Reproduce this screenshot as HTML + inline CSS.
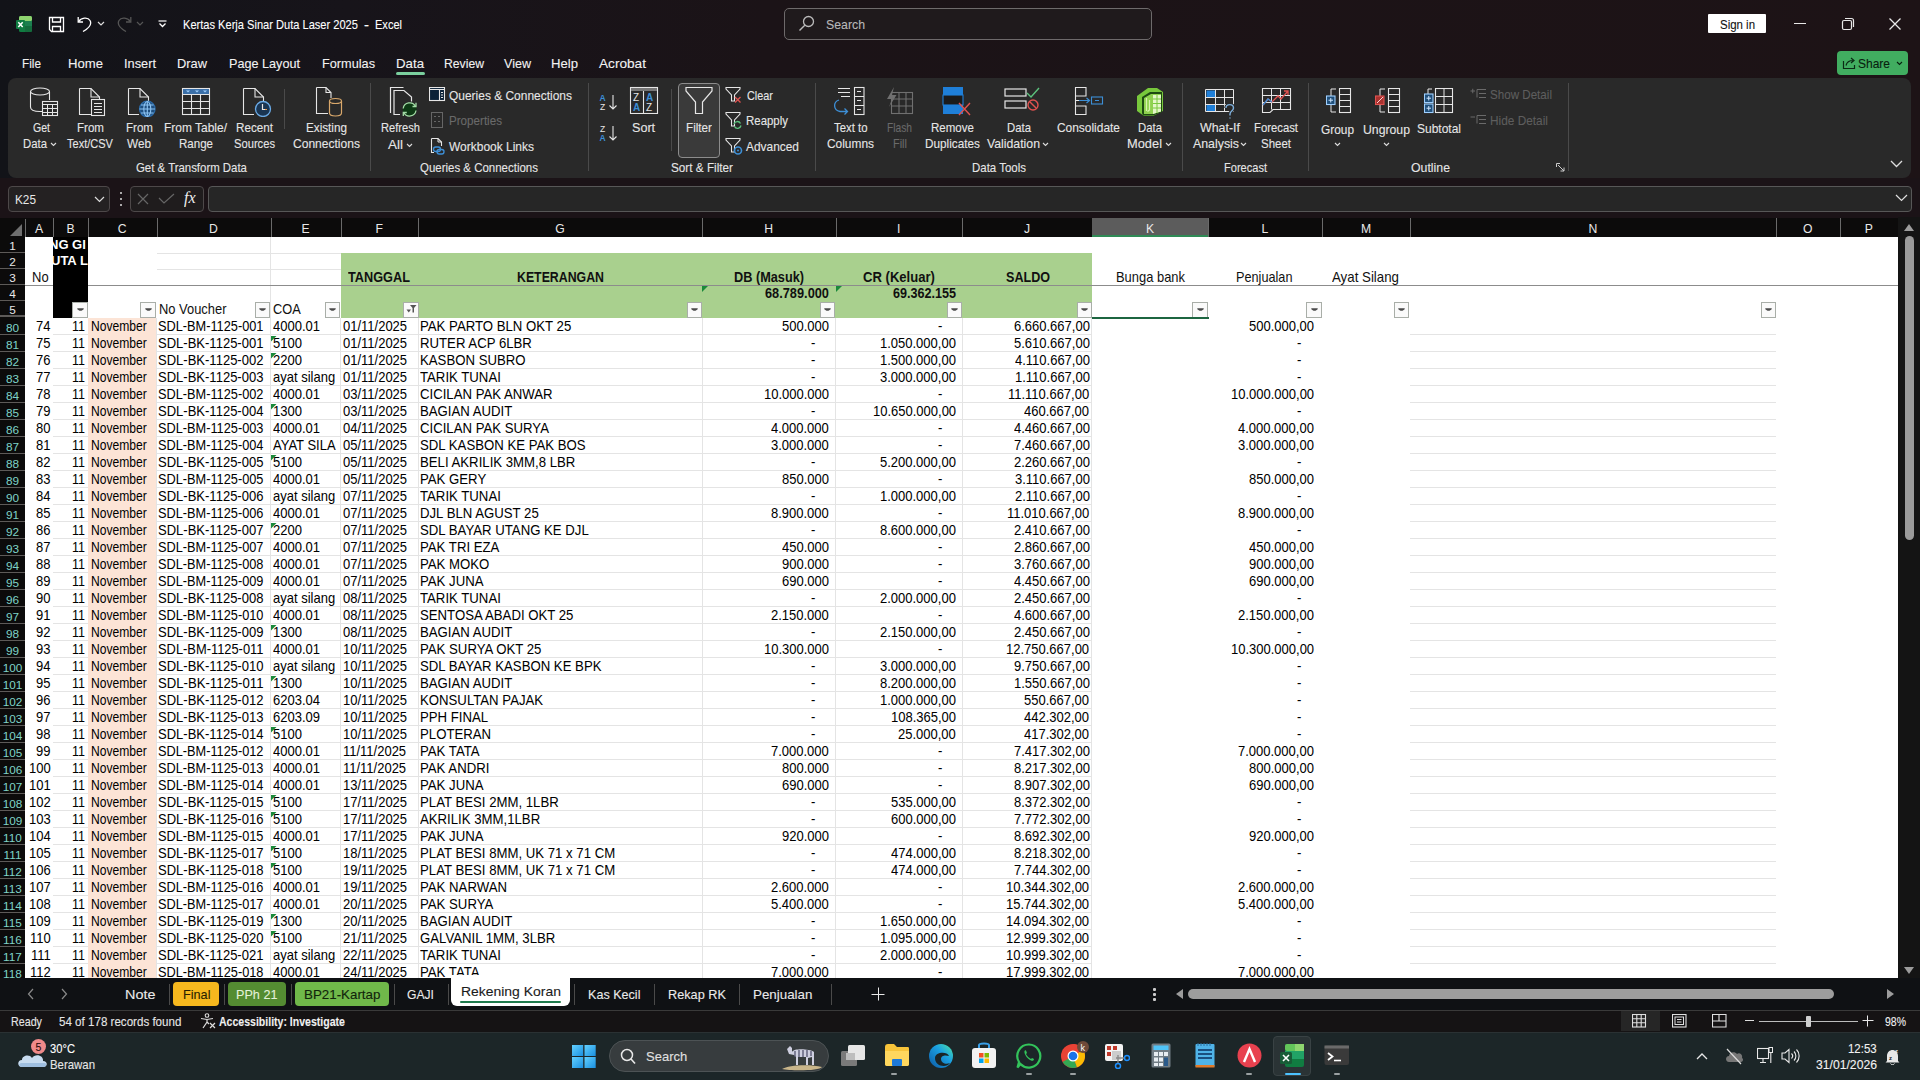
<!DOCTYPE html>
<html><head><meta charset="utf-8"><title>Excel</title>
<style>
html,body{margin:0;padding:0;}
body{width:1920px;height:1080px;overflow:hidden;position:relative;background:#1b1317;font-family:"Liberation Sans",sans-serif;}
.b,.t,.s{position:absolute;}
.t{white-space:pre;line-height:20px;transform-origin:0 50%;}
.u{-webkit-text-stroke:0.1px currentColor;}
</style></head><body>
<div class="b" style="left:0px;top:0px;width:1920px;height:178px;background:linear-gradient(90deg,#121318 0%,#17141a 18%,#1b1317 40%,#1d1316 100%);"></div>
<svg class="s" style="left:16px;top:16px;" width="16" height="16" viewBox="0 0 16 16" fill="none"><rect x="3" y="0" width="13" height="16" rx="1.5" fill="#107c41"/><rect x="3" y="0" width="13" height="5" rx="1.5" fill="#8ed36f"/><rect x="3" y="5" width="13" height="5" fill="#21a366"/><rect x="9" y="5" width="7" height="11" fill="#185c37" opacity="0.5"/><rect x="0" y="4" width="9" height="9" rx="1" fill="#107c41"/><path d="M2.3 6.2 L6.7 11 M6.7 6.2 L2.3 11" stroke="#fff" stroke-width="1.5"/></svg>
<svg class="s" style="left:48px;top:16px;" width="17" height="17" viewBox="0 0 17 17" fill="none"><path d="M1.5 1.5 H15.5 V15.5 H3.5 L1.5 13.5 Z" stroke="#fff" stroke-width="1.3"/><path d="M4.5 1.5 V6 H12.5 V1.5" stroke="#fff" stroke-width="1.3"/><path d="M4.5 15.5 V10.5 H12.5 V15.5" stroke="#fff" stroke-width="1.3"/></svg>
<svg class="s" style="left:77px;top:16px;" width="16" height="16" viewBox="0 0 16 16" fill="none"><path d="M1.2 1 V6 H6" stroke="#fff" stroke-width="1.3"/><path d="M1.5 5.8 C4 1.5 11 1 13 4.5 C15 8 12 12 6 15.5" stroke="#fff" stroke-width="1.3"/></svg>
<svg class="s" style="left:97px;top:21px;" width="8" height="5" viewBox="0 0 8 5" fill="none"><path d="M1 1 L4 4 L7 1" stroke="#ddd" stroke-width="1.2"/></svg>
<svg class="s" style="left:116px;top:16px;" width="16" height="16" viewBox="0 0 16 16" fill="none"><path d="M14.8 1 V6 H10" stroke="#555" stroke-width="1.3"/><path d="M14.5 5.8 C12 1.5 5 1 3 4.5 C1 8 4 12 10 15.5" stroke="#555" stroke-width="1.3"/></svg>
<svg class="s" style="left:136px;top:21px;" width="8" height="5" viewBox="0 0 8 5" fill="none"><path d="M1 1 L4 4 L7 1" stroke="#555" stroke-width="1.2"/></svg>
<svg class="s" style="left:158px;top:20px;" width="9" height="8" viewBox="0 0 9 8" fill="none"><path d="M0.5 1 H8.5" stroke="#fff" stroke-width="1.2"/><path d="M1.5 3.5 L4.5 6.5 L7.5 3.5" stroke="#fff" stroke-width="1.3"/></svg>
<div class="t u" style="left:183.00px;top:15.15px;font-size:12.80px;color:#fff;transform:scaleX(0.8660);">Kertas Kerja Sinar Duta Laser 2025</div>
<div class="t u" style="left:364.00px;top:15.15px;font-size:12.80px;color:#fff;transform:scaleX(1.1729);">-</div>
<div class="t u" style="left:375.00px;top:15.15px;font-size:12.80px;color:#fff;transform:scaleX(0.8626);">Excel</div>
<div class="b" style="left:784px;top:8px;width:368px;height:32px;background:#1f1a1c;box-sizing:border-box;border:1px solid #6e6a6b;border-radius:5px;"></div>
<svg class="s" style="left:798px;top:15px;" width="17" height="17" viewBox="0 0 17 17" fill="none"><circle cx="10.5" cy="6.5" r="5" stroke="#bbb" stroke-width="1.3"/><path d="M6.8 10.2 L1.5 15.5" stroke="#bbb" stroke-width="1.4"/></svg>
<div class="t u" style="left:826.00px;top:15.15px;font-size:13.00px;color:#b8b8b8;transform:scaleX(0.9468);">Search</div>
<div class="b" style="left:1708px;top:14px;width:58px;height:19px;background:#ffffff;border-radius:1px;"></div>
<div class="t u" style="left:1719.50px;top:15.15px;font-size:13.00px;color:#111;transform:scaleX(0.8805);">Sign in</div>
<div class="b" style="left:1794px;top:23px;width:12px;height:1px;background:#e8e8e8;"></div>
<svg class="s" style="left:1841px;top:17px;" width="14" height="14" viewBox="0 0 14 14" fill="none"><rect x="1.5" y="3.5" width="9" height="9" rx="1.5" stroke="#e8e8e8" stroke-width="1.2"/><path d="M4 1.5 H10.5 Q12.5 1.5 12.5 3.5 V10" stroke="#e8e8e8" stroke-width="1.2"/></svg>
<svg class="s" style="left:1888px;top:17px;" width="14" height="14" viewBox="0 0 14 14" fill="none"><path d="M1.5 1.5 L12.5 12.5 M12.5 1.5 L1.5 12.5" stroke="#e8e8e8" stroke-width="1.3"/></svg>
<div class="t u" style="left:22.00px;top:54.15px;font-size:13.00px;color:#f2f2f2;transform:scaleX(0.9070);">File</div>
<div class="t u" style="left:68.00px;top:54.15px;font-size:13.00px;color:#f2f2f2;transform:scaleX(1.0093);">Home</div>
<div class="t u" style="left:124.00px;top:54.15px;font-size:13.00px;color:#f2f2f2;transform:scaleX(0.9842);">Insert</div>
<div class="t u" style="left:177.00px;top:54.15px;font-size:13.00px;color:#f2f2f2;transform:scaleX(0.9889);">Draw</div>
<div class="t u" style="left:229.00px;top:54.15px;font-size:13.00px;color:#f2f2f2;transform:scaleX(0.9725);">Page Layout</div>
<div class="t u" style="left:322.00px;top:54.15px;font-size:13.00px;color:#f2f2f2;transform:scaleX(0.9782);">Formulas</div>
<div class="t u" style="left:396.00px;top:54.15px;font-size:13.00px;color:#f2f2f2;transform:scaleX(1.0196);">Data</div>
<div class="t u" style="left:444.00px;top:54.15px;font-size:13.00px;color:#f2f2f2;transform:scaleX(0.9384);">Review</div>
<div class="t u" style="left:504.00px;top:54.15px;font-size:13.00px;color:#f2f2f2;transform:scaleX(0.9662);">View</div>
<div class="t u" style="left:551.00px;top:54.15px;font-size:13.00px;color:#f2f2f2;transform:scaleX(1.0098);">Help</div>
<div class="t u" style="left:599.00px;top:54.15px;font-size:13.00px;color:#f2f2f2;transform:scaleX(1.0490);">Acrobat</div>
<div class="b" style="left:396px;top:72px;width:29px;height:3px;background:#7bcf9e;border-radius:2px;"></div>
<div class="b" style="left:1837px;top:51px;width:71px;height:24px;background:#41ad60;border-radius:4px;"></div>
<svg class="s" style="left:1842px;top:56px;" width="15" height="14" viewBox="0 0 15 14" fill="none"><path d="M1.5 5 V12.5 H12.5 V9" stroke="#0b2a14" stroke-width="1.2"/><path d="M4 9.5 C5 5.5 8 4.5 11 4.5 M9 2 L12 4.5 L9 7" stroke="#0b2a14" stroke-width="1.2"/></svg>
<div class="t u" style="left:1858.00px;top:54.15px;font-size:13.00px;color:#08200f;transform:scaleX(0.9224);">Share</div>
<svg class="s" style="left:1896px;top:61px;" width="7" height="5" viewBox="0 0 7 5" fill="none"><path d="M1 1 L3.5 3.5 L6 1" stroke="#08200f" stroke-width="1.1"/></svg>
<div class="b" style="left:8px;top:78px;width:1903px;height:100px;background:#292929;border-radius:8px;"></div>
<svg class="s" style="left:29px;top:87px;" width="30" height="30" viewBox="0 0 30 30" fill="none"><path d="M1.5 4.5 V20 C1.5 23 6 24.5 11 24.5 H13" stroke="#e6e6e6" stroke-width="1.1"/><ellipse cx="11" cy="4.5" rx="9.5" ry="3.5" stroke="#e6e6e6" stroke-width="1.1"/><path d="M20.5 4.5 V13" stroke="#e6e6e6" stroke-width="1.1"/><rect x="13.5" y="14.5" width="15" height="14" stroke="#e6e6e6" stroke-width="1.1" fill="#292929"/><path d="M13.5 17.5 H28.5 M13.5 21.5 H28.5 M13.5 25.5 H28.5 M18.5 17.5 V29 M23.5 17.5 V29" stroke="#e6e6e6" stroke-width="1"/></svg>
<div class="t u" style="left:32.50px;top:117.66px;font-size:12.60px;color:#e6e6e6;transform:scaleX(0.8371);">Get</div>
<div class="t u" style="left:23.00px;top:134.16px;font-size:12.60px;color:#e6e6e6;transform:scaleX(0.9017);">Data</div>
<svg class="s" style="left:49.5px;top:142px;" width="7" height="5" viewBox="0 0 7 5" fill="none"><path d="M1 1 L3.5 3.5 L6 1" stroke="#ddd" stroke-width="1.1"/></svg>
<svg class="s" style="left:78px;top:87px;" width="30" height="30" viewBox="0 0 30 30" fill="none"><path d="M1.5 1.5 H13 L21.5 10 V13 M1.5 1.5 V27.5 H13" stroke="#e6e6e6" stroke-width="1.1"/><path d="M13 1.5 V10 H21.5" stroke="#e6e6e6" stroke-width="1.1"/><rect x="13.5" y="12.5" width="13" height="16" stroke="#e6e6e6" stroke-width="1.1" fill="#292929"/><path d="M16 16.5 H24 M16 19.5 H24 M16 22.5 H24 M16 25.5 H24" stroke="#e6e6e6" stroke-width="1"/></svg>
<div class="t u" style="left:76.50px;top:117.66px;font-size:12.60px;color:#e6e6e6;transform:scaleX(0.9184);">From</div>
<div class="t u" style="left:67.00px;top:134.16px;font-size:12.60px;color:#e6e6e6;transform:scaleX(0.8759);">Text/CSV</div>
<svg class="s" style="left:127px;top:87px;" width="30" height="30" viewBox="0 0 30 30" fill="none"><path d="M1.5 1.5 H13 L21.5 10 V14 M1.5 1.5 V27.5 H12" stroke="#e6e6e6" stroke-width="1.1"/><path d="M13 1.5 V10 H21.5" stroke="#e6e6e6" stroke-width="1.1"/><circle cx="20.3" cy="22" r="7.8" fill="#1f4f7f" stroke="#2a6aa8" stroke-width="1.2"/><path d="M12.5 22 H28 M20.3 14.5 V29.5 M14 18 H26.5 M14 26 H26.5" stroke="#8cc4f4" stroke-width="1.1"/><ellipse cx="20.3" cy="22" rx="3.5" ry="7.5" stroke="#8cc4f4" stroke-width="1.1"/></svg>
<div class="t u" style="left:125.50px;top:117.66px;font-size:12.60px;color:#e6e6e6;transform:scaleX(0.9184);">From</div>
<div class="t u" style="left:127.00px;top:134.16px;font-size:12.60px;color:#e6e6e6;transform:scaleX(0.9346);">Web</div>
<svg class="s" style="left:181px;top:87px;" width="30" height="30" viewBox="0 0 30 30" fill="none"><rect x="1.5" y="1.5" width="27" height="26" stroke="#e6e6e6" stroke-width="1.1"/><rect x="2" y="2" width="26" height="5" fill="#3a6fa8"/><path d="M5 3.5 L7 5.5 L9 3.5 Z M14 3.5 L16 5.5 L18 3.5 Z M22 3.5 L24 5.5 L26 3.5 Z" fill="#9fd0ff"/><path d="M1.5 7.5 H28.5 M1.5 14.5 H28.5 M1.5 21.5 H28.5 M10.5 7.5 V27.5 M19.5 7.5 V27.5" stroke="#e6e6e6" stroke-width="1.1"/></svg>
<div class="t u" style="left:164.00px;top:117.66px;font-size:12.60px;color:#e6e6e6;transform:scaleX(0.9503);">From Table/</div>
<div class="t u" style="left:179.00px;top:134.16px;font-size:12.60px;color:#e6e6e6;transform:scaleX(0.9157);">Range</div>
<svg class="s" style="left:242px;top:87px;" width="30" height="30" viewBox="0 0 30 30" fill="none"><path d="M1.5 1.5 H13 L21.5 10 V14 M1.5 1.5 V27.5 H12" stroke="#e6e6e6" stroke-width="1.1"/><path d="M13 1.5 V10 H21.5" stroke="#e6e6e6" stroke-width="1.1"/><circle cx="21" cy="22" r="7.5" fill="#1a3552" stroke="#6aaae6" stroke-width="1.3"/><path d="M20.5 17 V22.5 H24.5" stroke="#e6e6e6" stroke-width="1.2"/><path d="M23 22.5 H25" stroke="#e89a4a" stroke-width="1.2"/></svg>
<div class="t u" style="left:235.50px;top:117.66px;font-size:12.60px;color:#e6e6e6;transform:scaleX(0.9268);">Recent</div>
<div class="t u" style="left:234.00px;top:134.16px;font-size:12.60px;color:#e6e6e6;transform:scaleX(0.8870);">Sources</div>
<div class="b" style="left:284px;top:89px;width:1px;height:40px;background:#4a4a4a;"></div>
<svg class="s" style="left:315px;top:86px;" width="30" height="31" viewBox="0 0 30 31" fill="none"><path d="M1.5 1.5 H11 L16 6.5 V12 M1.5 1.5 V27.5 H13" stroke="#e6e6e6" stroke-width="1.1"/><path d="M11 1.5 V6.5 H16" stroke="#e6e6e6" stroke-width="1.1"/><path d="M14.5 15 V27 C14.5 29 17.5 30 20.5 30 C23.5 30 26.5 29 26.5 27 V15" stroke="#d9a86b" stroke-width="1.2" fill="#292929"/><ellipse cx="20.5" cy="15" rx="6" ry="2.5" stroke="#d9a86b" stroke-width="1.2" fill="#292929"/></svg>
<div class="t u" style="left:306.00px;top:117.66px;font-size:12.60px;color:#e6e6e6;transform:scaleX(0.9293);">Existing</div>
<div class="t u" style="left:293.00px;top:134.16px;font-size:12.60px;color:#e6e6e6;transform:scaleX(0.9565);">Connections</div>
<div class="t u" style="left:135.50px;top:157.96px;font-size:12.60px;color:#e6e6e6;transform:scaleX(0.9058);">Get &amp; Transform Data</div>
<div class="b" style="left:370px;top:83px;width:1px;height:88px;background:#4a4a4a;"></div>
<svg class="s" style="left:389px;top:86px;" width="30" height="31" viewBox="0 0 30 31" fill="none"><path d="M1.5 27 V1.5 H14.5" stroke="#e6e6e6" stroke-width="1.2"/><path d="M11 28.5 H5 V4.5 H15 L22.5 11 V15.5" stroke="#e6e6e6" stroke-width="1.2"/><circle cx="20.6" cy="23.4" r="7" fill="#0d3a14"/><path d="M14.2 22.5 A6.5 6.5 0 0 1 26.5 20.5 M27 24.5 A6.5 6.5 0 0 1 14.8 26.5" stroke="#a3dca6" stroke-width="1.3"/><path d="M23.5 20.5 H27 V16.8 M17.8 26.5 H14.3 V30" stroke="#a3dca6" stroke-width="1.3"/></svg>
<div class="t u" style="left:381.00px;top:118.16px;font-size:12.60px;color:#e6e6e6;transform:scaleX(0.8840);">Refresh</div>
<div class="t u" style="left:388.00px;top:134.66px;font-size:12.60px;color:#e6e6e6;transform:scaleX(1.0711);">All</div>
<svg class="s" style="left:405.5px;top:142.5px;" width="7" height="5" viewBox="0 0 7 5" fill="none"><path d="M1 1 L3.5 3.5 L6 1" stroke="#ddd" stroke-width="1.1"/></svg>
<svg class="s" style="left:429px;top:87px;" width="17" height="15" viewBox="0 0 17 15" fill="none"><rect x="0.5" y="0.5" width="15" height="13" fill="#0b2238" stroke="#e6e6e6" stroke-width="1.1"/><path d="M0.5 2.5 H15.5 M10.5 2.5 V13.5" stroke="#e6e6e6" stroke-width="1.1"/><path d="M12 5.5 H14 M12 8 H14 M12 10.5 H14" stroke="#e6e6e6" stroke-width="1"/></svg>
<div class="t u" style="left:449.00px;top:85.66px;font-size:12.60px;color:#e6e6e6;transform:scaleX(0.9493);">Queries &amp; Connections</div>
<svg class="s" style="left:431px;top:112px;" width="12" height="16" viewBox="0 0 12 16" fill="none"><rect x="0.5" y="0.5" width="11" height="15" stroke="#666" stroke-width="1"/><path d="M3 4.5 H5 M7 4.5 H9 M3 9.5 H5 M7 9.5 H9" stroke="#666" stroke-width="1"/></svg>
<div class="t u" style="left:449.00px;top:111.16px;font-size:12.60px;color:#6a6a6a;transform:scaleX(0.9229);">Properties</div>
<svg class="s" style="left:430px;top:137px;" width="16" height="19" viewBox="0 0 16 19" fill="none"><path d="M1.5 1.5 H8 L11.5 5 V9 M1.5 1.5 V15.5 H4" stroke="#e6e6e6" stroke-width="1.1"/><path d="M8 1.5 V5 H11.5" stroke="#e6e6e6" stroke-width="1"/><rect x="3.5" y="10" width="7" height="4.5" rx="2.2" stroke="#3d8fd6" stroke-width="1.3"/><rect x="7" y="12.5" width="7" height="4.5" rx="2.2" stroke="#3d8fd6" stroke-width="1.3"/></svg>
<div class="t u" style="left:449.00px;top:136.66px;font-size:12.60px;color:#e6e6e6;transform:scaleX(0.9507);">Workbook Links</div>
<div class="t u" style="left:420.00px;top:157.96px;font-size:12.60px;color:#e6e6e6;transform:scaleX(0.9107);">Queries &amp; Connections</div>
<div class="b" style="left:588px;top:83px;width:1px;height:88px;background:#4a4a4a;"></div>
<svg class="s" style="left:599px;top:93px;" width="20" height="18" viewBox="0 0 20 18" fill="none"><text x="0.5" y="8" font-size="8.5" font-family="Liberation Sans" font-weight="bold" fill="#3d8fd6">A</text><text x="1" y="17" font-size="8.5" font-family="Liberation Sans" fill="#e6e6e6">Z</text><path d="M14 2 V16 M10.5 12.5 L14 16 L17.5 12.5" stroke="#e6e6e6" stroke-width="1.1"/></svg>
<svg class="s" style="left:599px;top:124px;" width="20" height="18" viewBox="0 0 20 18" fill="none"><text x="1" y="8" font-size="8.5" font-family="Liberation Sans" fill="#e6e6e6">Z</text><text x="0.5" y="17" font-size="8.5" font-family="Liberation Sans" font-weight="bold" fill="#3d8fd6">A</text><path d="M14 2 V16 M10.5 12.5 L14 16 L17.5 12.5" stroke="#e6e6e6" stroke-width="1.1"/></svg>
<svg class="s" style="left:629px;top:86px;" width="30" height="28" viewBox="0 0 30 28" fill="none"><rect x="1.5" y="1.5" width="27" height="26" stroke="#e6e6e6" stroke-width="1.1"/><rect x="2" y="2" width="26" height="3" fill="#777"/><path d="M14.5 5 V27.5" stroke="#e6e6e6" stroke-width="1.1"/><text x="4" y="15" font-size="10" font-family="Liberation Sans" fill="#e6e6e6">Z</text><text x="4" y="25" font-size="10" font-family="Liberation Sans" font-weight="bold" fill="#3d8fd6">A</text><text x="17" y="15" font-size="10" font-family="Liberation Sans" font-weight="bold" fill="#3d8fd6">A</text><text x="17" y="25" font-size="10" font-family="Liberation Sans" fill="#e6e6e6">Z</text></svg>
<div class="t u" style="left:632.00px;top:117.66px;font-size:12.60px;color:#e6e6e6;">Sort</div>
<div class="b" style="left:671px;top:89px;width:1px;height:62px;background:#4a4a4a;"></div>
<div class="b" style="left:678px;top:82.5px;width:42px;height:75.5px;background:#3a3a3a;box-sizing:border-box;border:1px solid #8c8c8c;border-radius:4px;"></div>
<svg class="s" style="left:684px;top:86px;" width="30" height="30" viewBox="0 0 30 30" fill="none"><path d="M2 1.5 H28 V5 L18.5 16 V27.5 H11.5 V16 L2 5 Z" stroke="#e6e6e6" stroke-width="1.2"/></svg>
<div class="t u" style="left:686.00px;top:117.66px;font-size:12.60px;color:#e6e6e6;transform:scaleX(0.9286);">Filter</div>
<svg class="s" style="left:725px;top:86px;" width="18" height="18" viewBox="0 0 18 18" fill="none"><path d="M1 1.5 H15 V3 L9.5 9 V15 H6.5 V9 L1 3 Z" stroke="#e6e6e6" stroke-width="1.1"/><path d="M10 11 L15.5 16.5 M15.5 11 L10 16.5" stroke="#e0524f" stroke-width="1.3"/></svg>
<div class="t u" style="left:747.00px;top:85.66px;font-size:12.60px;color:#e6e6e6;transform:scaleX(0.8635);">Clear</div>
<svg class="s" style="left:725px;top:111px;" width="18" height="18" viewBox="0 0 18 18" fill="none"><path d="M1 1.5 H15 V3 L9.5 9 V15 H6.5 V9 L1 3 Z" stroke="#e6e6e6" stroke-width="1.1"/><path d="M9 13 A3.5 3.5 0 0 1 15.5 12.5 M16 14.5 A3.5 3.5 0 0 1 9.5 15.5" stroke="#5cc27d" stroke-width="1.3"/></svg>
<div class="t u" style="left:746.00px;top:111.16px;font-size:12.60px;color:#e6e6e6;transform:scaleX(0.9085);">Reapply</div>
<svg class="s" style="left:725px;top:137px;" width="18" height="18" viewBox="0 0 18 18" fill="none"><path d="M1 1.5 H15 V3 L9.5 9 V15 H6.5 V9 L1 3 Z" stroke="#e6e6e6" stroke-width="1.1"/><circle cx="13" cy="13.5" r="3.5" stroke="#3d8fd6" stroke-width="1.6"/><circle cx="13" cy="13.5" r="1" fill="#3d8fd6"/></svg>
<div class="t u" style="left:746.00px;top:137.16px;font-size:12.60px;color:#e6e6e6;transform:scaleX(0.9457);">Advanced</div>
<div class="t u" style="left:671.00px;top:157.96px;font-size:12.60px;color:#e6e6e6;transform:scaleX(0.9321);">Sort &amp; Filter</div>
<div class="b" style="left:815px;top:83px;width:1px;height:88px;background:#4a4a4a;"></div>
<svg class="s" style="left:832px;top:86px;" width="34" height="32" viewBox="0 0 34 32" fill="none"><path d="M6 2.5 H18 M6 6.5 H18 M9 10.5 H18" stroke="#e6e6e6" stroke-width="1.1"/><rect x="22.5" y="1.5" width="9.5" height="27" stroke="#e6e6e6" stroke-width="1.1"/><path d="M22.5 10.5 H32 M22.5 19.5 H32 M25 5.5 H29 M25 14.5 H29 M25 23.5 H29" stroke="#e6e6e6" stroke-width="1"/><path d="M7 14 C1 16 1 24 8 25.5 H15 M12.5 22.5 L15.5 25.5 L12.5 28.5" stroke="#3d8fd6" stroke-width="1.3"/></svg>
<div class="t u" style="left:834.00px;top:117.66px;font-size:12.60px;color:#e6e6e6;transform:scaleX(0.9026);">Text to</div>
<div class="t u" style="left:827.00px;top:134.16px;font-size:12.60px;color:#e6e6e6;transform:scaleX(0.9453);">Columns</div>
<svg class="s" style="left:883px;top:86px;" width="32" height="30" viewBox="0 0 32 30" fill="none"><path d="M11 1 L4 13 H9 L6 21 L13.5 9 H9 Z" fill="#707070"/><rect x="8.5" y="6.5" width="21" height="21" stroke="#707070" stroke-width="1.1"/><path d="M8.5 13 H29.5 M8.5 20 H29.5 M16 6.5 V27.5 M23 6.5 V27.5" stroke="#707070" stroke-width="1.1"/></svg>
<div class="t u" style="left:887.00px;top:117.66px;font-size:12.60px;color:#6a6a6a;transform:scaleX(0.8114);">Flash</div>
<div class="t u" style="left:893.00px;top:134.16px;font-size:12.60px;color:#6a6a6a;transform:scaleX(0.8698);">Fill</div>
<svg class="s" style="left:942px;top:86px;" width="32" height="32" viewBox="0 0 32 32" fill="none"><rect x="1" y="1" width="20" height="8" fill="#1f7fd8"/><rect x="1" y="9" width="20" height="10" fill="#1b1b1b" stroke="#1f7fd8" stroke-width="1.1"/><rect x="1" y="19" width="20" height="9" fill="#1f7fd8"/><path d="M17 17 L28 29 M28 17 L17 29" stroke="#e0524f" stroke-width="1.4"/></svg>
<div class="t u" style="left:931.00px;top:117.66px;font-size:12.60px;color:#e6e6e6;transform:scaleX(0.9165);">Remove</div>
<div class="t u" style="left:925.00px;top:134.16px;font-size:12.60px;color:#e6e6e6;transform:scaleX(0.9349);">Duplicates</div>
<svg class="s" style="left:1004px;top:87px;" width="38" height="28" viewBox="0 0 38 28" fill="none"><rect x="1" y="2" width="21" height="7" stroke="#e6e6e6" stroke-width="1.2"/><rect x="1" y="14" width="21" height="7" stroke="#e6e6e6" stroke-width="1.2"/><path d="M23 6 L27 10 L35 1" stroke="#5cc27d" stroke-width="1.4"/><circle cx="29" cy="18" r="5" stroke="#e0524f" stroke-width="1.4"/><path d="M26 15 L32 21" stroke="#e0524f" stroke-width="1.4"/></svg>
<div class="t u" style="left:1007.00px;top:117.66px;font-size:12.60px;color:#e6e6e6;transform:scaleX(0.9017);">Data</div>
<div class="t u" style="left:987.00px;top:134.16px;font-size:12.60px;color:#e6e6e6;transform:scaleX(0.9741);">Validation</div>
<svg class="s" style="left:1041.5px;top:142px;" width="7" height="5" viewBox="0 0 7 5" fill="none"><path d="M1 1 L3.5 3.5 L6 1" stroke="#ddd" stroke-width="1.1"/></svg>
<svg class="s" style="left:1074px;top:86px;" width="32" height="30" viewBox="0 0 32 30" fill="none"><path d="M1.5 1.5 H12 V10 H1.5 Z M1.5 20 H12 V28.5 H1.5 Z M1.5 10 V20" stroke="#e6e6e6" stroke-width="1.1"/><path d="M1.5 14.5 H14" stroke="#e6e6e6" stroke-width="1"/><path d="M5 14.5 H15 M12.5 12 L15.5 14.5 L12.5 17" stroke="#3d8fd6" stroke-width="1.2"/><rect x="17.5" y="11" width="11" height="7" stroke="#3d8fd6" stroke-width="1.1"/><path d="M21 14.5 H25" stroke="#3d8fd6" stroke-width="1"/></svg>
<div class="t u" style="left:1057.00px;top:117.66px;font-size:12.60px;color:#e6e6e6;transform:scaleX(0.9467);">Consolidate</div>
<svg class="s" style="left:1135px;top:86px;" width="30" height="31" viewBox="0 0 30 31" fill="none"><path d="M2 10 L13 2 H22 L28 6 V25 L18 30 H9 L2 25 Z" fill="#78c83c"/><path d="M7 11 L15 6 H27 V26 L18 29.5 H8 L7 27 Z" fill="#1e4a12"/><path d="M9 12 L16 8 H26 V25.5 L18 28 H9 Z" fill="#8fd24f"/><path d="M18 9 H26 V25.5 L18 28 Z" fill="#e4f7c8"/><path d="M18 13 H26 M18 17.5 H26 M18 22 H26 M22 9 V27" stroke="#78c83c" stroke-width="1"/><path d="M11.5 12 V25 M14.5 14 V24 L12.5 25.5" stroke="#d8f2b0" stroke-width="1.2"/></svg>
<div class="t u" style="left:1138.00px;top:117.66px;font-size:12.60px;color:#e6e6e6;transform:scaleX(0.9017);">Data</div>
<div class="t u" style="left:1127.00px;top:134.16px;font-size:12.60px;color:#e6e6e6;transform:scaleX(1.0198);">Model</div>
<svg class="s" style="left:1164.5px;top:142px;" width="7" height="5" viewBox="0 0 7 5" fill="none"><path d="M1 1 L3.5 3.5 L6 1" stroke="#ddd" stroke-width="1.1"/></svg>
<div class="t u" style="left:972.00px;top:157.96px;font-size:12.60px;color:#e6e6e6;transform:scaleX(0.9106);">Data Tools</div>
<div class="b" style="left:1182px;top:83px;width:1px;height:88px;background:#4a4a4a;"></div>
<svg class="s" style="left:1205px;top:89px;" width="34" height="30" viewBox="0 0 34 30" fill="none"><rect x="1.5" y="1.5" width="8.5" height="6.5" fill="#1f7fd8"/><rect x="1.5" y="16" width="8.5" height="6.5" fill="#1f7fd8"/><path d="M0.5 0.5 H28.5 V22.5 H0.5 Z M0.5 8.5 H28.5 M0.5 15.5 H28.5 M10.5 0.5 V22.5 M19.5 0.5 V22.5" stroke="#e6e6e6" stroke-width="1"/><path d="M21 19 C21 14.5 28.5 14.5 28.5 19 C28.5 22 25 22 25 25 V26.5 M25 28.5 V29.5" stroke="#292929" stroke-width="3.5"/><path d="M21 19 C21 14.5 28.5 14.5 28.5 19 C28.5 22 25 22 25 25 V26.5 M25 28.5 V29.5" stroke="#7fb0dc" stroke-width="1.4"/></svg>
<div class="t u" style="left:1200.00px;top:117.66px;font-size:12.60px;color:#e6e6e6;transform:scaleX(0.9851);">What-If</div>
<div class="t u" style="left:1193.00px;top:134.16px;font-size:12.60px;color:#e6e6e6;transform:scaleX(0.9804);">Analysis</div>
<svg class="s" style="left:1239.5px;top:142px;" width="7" height="5" viewBox="0 0 7 5" fill="none"><path d="M1 1 L3.5 3.5 L6 1" stroke="#ddd" stroke-width="1.1"/></svg>
<svg class="s" style="left:1261px;top:87px;" width="31" height="28" viewBox="0 0 31 28" fill="none"><path d="M1.5 1.5 H29.5 V22.5 H12 L9 25.5 H1.5 Z" stroke="#e6e6e6" stroke-width="1.1"/><path d="M1.5 8.5 H29.5 M1.5 15.5 H29.5 M10.5 1.5 V22.5 M19.5 1.5 V22.5" stroke="#e6e6e6" stroke-width="1"/><path d="M2 18 L7 12 L11 15 L17 9 L20 12 L27 4 M23 4 H27 V8" stroke="#e0524f" stroke-width="1.3"/><path d="M2 18 L7 12 L11 15" stroke="#3d8fd6" stroke-width="1.3"/></svg>
<div class="t u" style="left:1254.00px;top:117.66px;font-size:12.60px;color:#e6e6e6;transform:scaleX(0.8976);">Forecast</div>
<div class="t u" style="left:1261.00px;top:134.16px;font-size:12.60px;color:#e6e6e6;transform:scaleX(0.9111);">Sheet</div>
<div class="t u" style="left:1224.00px;top:157.96px;font-size:12.60px;color:#e6e6e6;transform:scaleX(0.8772);">Forecast</div>
<div class="b" style="left:1308px;top:83px;width:1px;height:88px;background:#4a4a4a;"></div>
<svg class="s" style="left:1326px;top:88px;" width="26" height="26" viewBox="0 0 26 26" fill="none"><path d="M10 1 H5 V24 H10" stroke="#e6e6e6" stroke-width="1"/><rect x="13.5" y="0.5" width="11" height="24" stroke="#e6e6e6" stroke-width="1.1"/><path d="M13.5 6.5 H24.5 M13.5 12.5 H24.5 M13.5 18.5 H24.5" stroke="#e6e6e6" stroke-width="1"/><rect x="0.5" y="8" width="8.5" height="8.5" fill="#1f4e79" stroke="#9fd0ff" stroke-width="1.1"/><path d="M2.5 12.2 H7 M4.75 10 V14.5" stroke="#cfe6ff" stroke-width="1"/></svg>
<div class="t u" style="left:1321.00px;top:120.16px;font-size:12.60px;color:#e6e6e6;transform:scaleX(0.9423);">Group</div>
<svg class="s" style="left:1333.5px;top:142px;" width="7" height="5" viewBox="0 0 7 5" fill="none"><path d="M1 1 L3.5 3.5 L6 1" stroke="#ddd" stroke-width="1.1"/></svg>
<svg class="s" style="left:1375px;top:88px;" width="26" height="26" viewBox="0 0 26 26" fill="none"><path d="M10 1 H5 V24 H10" stroke="#e6e6e6" stroke-width="1"/><rect x="13.5" y="0.5" width="11" height="24" stroke="#e6e6e6" stroke-width="1.1"/><path d="M13.5 6.5 H24.5 M13.5 12.5 H24.5 M13.5 18.5 H24.5" stroke="#e6e6e6" stroke-width="1"/><rect x="0.5" y="8" width="8.5" height="8.5" fill="#a8322f" stroke="#e0524f" stroke-width="1.1"/><path d="M2 15 L8 9" stroke="#ffd0d0" stroke-width="1"/></svg>
<div class="t u" style="left:1363.00px;top:120.16px;font-size:12.60px;color:#e6e6e6;transform:scaleX(0.9724);">Ungroup</div>
<svg class="s" style="left:1382.5px;top:142px;" width="7" height="5" viewBox="0 0 7 5" fill="none"><path d="M1 1 L3.5 3.5 L6 1" stroke="#ddd" stroke-width="1.1"/></svg>
<svg class="s" style="left:1424px;top:88px;" width="30" height="26" viewBox="0 0 30 26" fill="none"><path d="M8 1 H4 V6" stroke="#e6e6e6" stroke-width="1"/><rect x="11.5" y="0.5" width="17" height="24" stroke="#e6e6e6" stroke-width="1.1"/><path d="M11.5 8.5 H28.5 M11.5 16.5 H28.5 M20 0.5 V24.5" stroke="#e6e6e6" stroke-width="1"/><rect x="0.5" y="6" width="8.5" height="8.5" fill="#1f4e79" stroke="#9fd0ff" stroke-width="1.1"/><rect x="0.5" y="16" width="8.5" height="8.5" fill="#1f4e79" stroke="#9fd0ff" stroke-width="1.1"/><path d="M2.5 10.2 H7 M4.75 8 V12.5 M2.5 20.2 H7 M4.75 18 V22.5" stroke="#cfe6ff" stroke-width="1"/></svg>
<div class="t u" style="left:1417.00px;top:118.66px;font-size:12.60px;color:#e6e6e6;transform:scaleX(0.9516);">Subtotal</div>
<svg class="s" style="left:1470px;top:88px;" width="17" height="12" viewBox="0 0 17 12" fill="none"><path d="M0.5 3 H5 M2.75 0.75 V5.25" stroke="#6a6a6a" stroke-width="1"/><path d="M7 1.5 H16 M9 5.5 H16 M9 9.5 H16 M7 1.5 V9.5" stroke="#6a6a6a" stroke-width="1"/></svg>
<div class="t u" style="left:1490.00px;top:85.16px;font-size:12.60px;color:#5e5e5e;transform:scaleX(0.9221);">Show Detail</div>
<svg class="s" style="left:1470px;top:114px;" width="17" height="12" viewBox="0 0 17 12" fill="none"><path d="M0.5 3 H5" stroke="#6a6a6a" stroke-width="1"/><path d="M7 1.5 H16 M9 5.5 H16 M9 9.5 H16 M7 1.5 V9.5" stroke="#6a6a6a" stroke-width="1"/></svg>
<div class="t u" style="left:1490.00px;top:111.16px;font-size:12.60px;color:#5e5e5e;transform:scaleX(0.9411);">Hide Detail</div>
<div class="t u" style="left:1411.00px;top:157.96px;font-size:12.60px;color:#e6e6e6;transform:scaleX(0.9769);">Outline</div>
<svg class="s" style="left:1556px;top:163px;" width="9" height="9" viewBox="0 0 9 9" fill="none"><path d="M0.5 0.5 H4 M0.5 0.5 V4 M2 2 L8 8 M4.5 8 H8 V4.5" stroke="#ccc" stroke-width="1"/></svg>
<div class="b" style="left:1568px;top:83px;width:1px;height:88px;background:#4a4a4a;"></div>
<svg class="s" style="left:1890px;top:160px;" width="13" height="8" viewBox="0 0 13 8" fill="none"><path d="M1 1 L6.5 6.5 L12 1" stroke="#ddd" stroke-width="1.3"/></svg>
<div style="position:absolute;left:0;top:0;width:1920px;height:978px;overflow:hidden"><div class="b" style="left:8px;top:186px;width:102px;height:26px;background:#242122;box-sizing:border-box;border:1px solid #4d4849;border-radius:4px;"></div>
<div class="t" style="left:15.00px;top:190.16px;font-size:12.60px;color:#e8e8e8;transform:scaleX(0.9367);">K25</div>
<svg class="s" style="left:94px;top:196px;" width="11" height="7" viewBox="0 0 11 7" fill="none"><path d="M1 1 L5.5 5.5 L10 1" stroke="#ddd" stroke-width="1.2"/></svg>
<div class="b" style="left:119.5px;top:192px;width:2px;height:2px;background:#ddd;border-radius:1px;"></div>
<div class="b" style="left:119.5px;top:198px;width:2px;height:2px;background:#ddd;border-radius:1px;"></div>
<div class="b" style="left:119.5px;top:204px;width:2px;height:2px;background:#ddd;border-radius:1px;"></div>
<div class="b" style="left:130px;top:186px;width:74px;height:26px;background:#1f1c1d;box-sizing:border-box;border:1px solid #4d4849;border-radius:4px;"></div>
<svg class="s" style="left:137px;top:193px;" width="12" height="12" viewBox="0 0 12 12" fill="none"><path d="M1 1 L11 11 M11 1 L1 11" stroke="#666" stroke-width="1.2"/></svg>
<svg class="s" style="left:158px;top:193px;" width="17" height="11" viewBox="0 0 17 11" fill="none"><path d="M1 5 L6 10 L16 1" stroke="#666" stroke-width="1.2"/></svg>
<div class="t" style="left:184px;top:188px;font-family:'Liberation Serif',serif;font-style:italic;font-size:17px;color:#eee;line-height:20px;transform:scaleX(0.95)">fx</div>
<div class="b" style="left:208px;top:186px;width:1704px;height:26px;background:#262626;box-sizing:border-box;border:1px solid #575757;border-radius:4px;"></div>
<svg class="s" style="left:1895px;top:194px;" width="13" height="8" viewBox="0 0 13 8" fill="none"><path d="M1 1 L6.5 6.5 L12 1" stroke="#e0e0e0" stroke-width="1.2"/></svg>
<div class="b" style="left:0px;top:218px;width:1898px;height:19px;background:#0c0b0b;"></div>
<svg class="s" style="left:10px;top:224px;" width="13" height="13" viewBox="0 0 13 13" fill="none"><path d="M12 0 V12 H0 Z" fill="#6f6f6f"/></svg>
<div class="b" style="left:25px;top:219px;width:1px;height:18px;background:#6a6a6a;"></div>
<div class="b" style="left:53px;top:218px;width:1px;height:19px;background:#6a6a6a;"></div>
<div class="t" style="left:34.93px;top:219.16px;font-size:12.20px;color:#e8e8e8;">A</div>
<div class="b" style="left:88px;top:218px;width:1px;height:19px;background:#6a6a6a;"></div>
<div class="t" style="left:66.43px;top:219.16px;font-size:12.20px;color:#e8e8e8;">B</div>
<div class="b" style="left:156.5px;top:218px;width:1px;height:19px;background:#6a6a6a;"></div>
<div class="t" style="left:117.84px;top:219.16px;font-size:12.20px;color:#e8e8e8;">C</div>
<div class="b" style="left:270.5px;top:218px;width:1px;height:19px;background:#6a6a6a;"></div>
<div class="t" style="left:209.09px;top:219.16px;font-size:12.20px;color:#e8e8e8;">D</div>
<div class="b" style="left:340.5px;top:218px;width:1px;height:19px;background:#6a6a6a;"></div>
<div class="t" style="left:301.43px;top:219.16px;font-size:12.20px;color:#e8e8e8;">E</div>
<div class="b" style="left:418px;top:218px;width:1px;height:19px;background:#6a6a6a;"></div>
<div class="t" style="left:375.52px;top:219.16px;font-size:12.20px;color:#e8e8e8;">F</div>
<div class="b" style="left:702px;top:218px;width:1px;height:19px;background:#6a6a6a;"></div>
<div class="t" style="left:555.26px;top:219.16px;font-size:12.20px;color:#e8e8e8;">G</div>
<div class="b" style="left:835.5px;top:218px;width:1px;height:19px;background:#6a6a6a;"></div>
<div class="t" style="left:764.34px;top:219.16px;font-size:12.20px;color:#e8e8e8;">H</div>
<div class="b" style="left:962px;top:218px;width:1px;height:19px;background:#6a6a6a;"></div>
<div class="t" style="left:897.06px;top:219.16px;font-size:12.20px;color:#e8e8e8;">I</div>
<div class="b" style="left:1092px;top:218px;width:1px;height:19px;background:#6a6a6a;"></div>
<div class="t" style="left:1023.95px;top:219.16px;font-size:12.20px;color:#e8e8e8;">J</div>
<div class="b" style="left:1092px;top:218px;width:116px;height:17px;background:#5c5c5c;"></div>
<div class="b" style="left:1092px;top:235px;width:116px;height:2px;background:#2f8a55;"></div>
<div class="b" style="left:1208px;top:218px;width:1px;height:19px;background:#6a6a6a;"></div>
<div class="t" style="left:1145.93px;top:219.16px;font-size:12.20px;color:#e8e8e8;">K</div>
<div class="b" style="left:1322px;top:218px;width:1px;height:19px;background:#6a6a6a;"></div>
<div class="t" style="left:1261.61px;top:219.16px;font-size:12.20px;color:#e8e8e8;">L</div>
<div class="b" style="left:1410px;top:218px;width:1px;height:19px;background:#6a6a6a;"></div>
<div class="t" style="left:1360.92px;top:219.16px;font-size:12.20px;color:#e8e8e8;">M</div>
<div class="b" style="left:1776px;top:218px;width:1px;height:19px;background:#6a6a6a;"></div>
<div class="t" style="left:1588.59px;top:219.16px;font-size:12.20px;color:#e8e8e8;">N</div>
<div class="b" style="left:1839.5px;top:218px;width:1px;height:19px;background:#6a6a6a;"></div>
<div class="t" style="left:1803.01px;top:219.16px;font-size:12.20px;color:#e8e8e8;">O</div>
<div class="b" style="left:1898px;top:218px;width:1px;height:19px;background:#6a6a6a;"></div>
<div class="t" style="left:1864.68px;top:219.16px;font-size:12.20px;color:#e8e8e8;">P</div>
<div class="b" style="left:1898px;top:217px;width:22px;height:761px;background:#141414;"></div>
<svg class="s" style="left:1903px;top:223px;" width="12" height="9" viewBox="0 0 12 9" fill="none"><path d="M6 1 L11 8 H1 Z" fill="#9c9c9c"/></svg>
<div class="b" style="left:1905px;top:236px;width:9px;height:304px;background:#9a9a9a;border-radius:5px;"></div>
<svg class="s" style="left:1903px;top:966px;" width="12" height="9" viewBox="0 0 12 9" fill="none"><path d="M6 8 L11 1 H1 Z" fill="#9c9c9c"/></svg>
<div class="b" style="left:25px;top:237px;width:1873px;height:741px;background:#ffffff;"></div>
<div class="b" style="left:0px;top:237px;width:25px;height:741px;background:#0c0b0b;"></div>
<div class="b" style="left:0px;top:252px;width:25px;height:1px;background:#5d5a58;"></div>
<div class="t" style="left:9.22px;top:236.16px;font-size:11.80px;color:#e8e8e8;">1</div>
<div class="b" style="left:0px;top:268px;width:25px;height:1px;background:#5d5a58;"></div>
<div class="t" style="left:9.22px;top:252.16px;font-size:11.80px;color:#e8e8e8;">2</div>
<div class="b" style="left:0px;top:284px;width:25px;height:1px;background:#5d5a58;"></div>
<div class="t" style="left:9.22px;top:268.16px;font-size:11.80px;color:#e8e8e8;">3</div>
<div class="b" style="left:0px;top:300px;width:25px;height:1px;background:#5d5a58;"></div>
<div class="t" style="left:9.22px;top:284.16px;font-size:11.80px;color:#e8e8e8;">4</div>
<div class="b" style="left:0px;top:316px;width:25px;height:1px;background:#5d5a58;"></div>
<div class="t" style="left:9.22px;top:300.16px;font-size:11.80px;color:#e8e8e8;">5</div>
<div class="b" style="left:0px;top:334px;width:25px;height:1px;background:#5d5a58;"></div>
<div class="t" style="left:5.94px;top:317.66px;font-size:11.80px;color:#7fd3c7;">80</div>
<div class="b" style="left:0px;top:351px;width:25px;height:1px;background:#5d5a58;"></div>
<div class="t" style="left:5.94px;top:334.66px;font-size:11.80px;color:#7fd3c7;">81</div>
<div class="b" style="left:0px;top:368px;width:25px;height:1px;background:#5d5a58;"></div>
<div class="t" style="left:5.94px;top:351.66px;font-size:11.80px;color:#7fd3c7;">82</div>
<div class="b" style="left:0px;top:385px;width:25px;height:1px;background:#5d5a58;"></div>
<div class="t" style="left:5.94px;top:368.66px;font-size:11.80px;color:#7fd3c7;">83</div>
<div class="b" style="left:0px;top:402px;width:25px;height:1px;background:#5d5a58;"></div>
<div class="t" style="left:5.94px;top:385.66px;font-size:11.80px;color:#7fd3c7;">84</div>
<div class="b" style="left:0px;top:419px;width:25px;height:1px;background:#5d5a58;"></div>
<div class="t" style="left:5.94px;top:402.66px;font-size:11.80px;color:#7fd3c7;">85</div>
<div class="b" style="left:0px;top:436px;width:25px;height:1px;background:#5d5a58;"></div>
<div class="t" style="left:5.94px;top:419.66px;font-size:11.80px;color:#7fd3c7;">86</div>
<div class="b" style="left:0px;top:453px;width:25px;height:1px;background:#5d5a58;"></div>
<div class="t" style="left:5.94px;top:436.66px;font-size:11.80px;color:#7fd3c7;">87</div>
<div class="b" style="left:0px;top:470px;width:25px;height:1px;background:#5d5a58;"></div>
<div class="t" style="left:5.94px;top:453.66px;font-size:11.80px;color:#7fd3c7;">88</div>
<div class="b" style="left:0px;top:487px;width:25px;height:1px;background:#5d5a58;"></div>
<div class="t" style="left:5.94px;top:470.66px;font-size:11.80px;color:#7fd3c7;">89</div>
<div class="b" style="left:0px;top:504px;width:25px;height:1px;background:#5d5a58;"></div>
<div class="t" style="left:5.94px;top:487.66px;font-size:11.80px;color:#7fd3c7;">90</div>
<div class="b" style="left:0px;top:521px;width:25px;height:1px;background:#5d5a58;"></div>
<div class="t" style="left:5.94px;top:504.66px;font-size:11.80px;color:#7fd3c7;">91</div>
<div class="b" style="left:0px;top:538px;width:25px;height:1px;background:#5d5a58;"></div>
<div class="t" style="left:5.94px;top:521.66px;font-size:11.80px;color:#7fd3c7;">92</div>
<div class="b" style="left:0px;top:555px;width:25px;height:1px;background:#5d5a58;"></div>
<div class="t" style="left:5.94px;top:538.66px;font-size:11.80px;color:#7fd3c7;">93</div>
<div class="b" style="left:0px;top:572px;width:25px;height:1px;background:#5d5a58;"></div>
<div class="t" style="left:5.94px;top:555.66px;font-size:11.80px;color:#7fd3c7;">94</div>
<div class="b" style="left:0px;top:589px;width:25px;height:1px;background:#5d5a58;"></div>
<div class="t" style="left:5.94px;top:572.66px;font-size:11.80px;color:#7fd3c7;">95</div>
<div class="b" style="left:0px;top:606px;width:25px;height:1px;background:#5d5a58;"></div>
<div class="t" style="left:5.94px;top:589.66px;font-size:11.80px;color:#7fd3c7;">96</div>
<div class="b" style="left:0px;top:623px;width:25px;height:1px;background:#5d5a58;"></div>
<div class="t" style="left:5.94px;top:606.66px;font-size:11.80px;color:#7fd3c7;">97</div>
<div class="b" style="left:0px;top:640px;width:25px;height:1px;background:#5d5a58;"></div>
<div class="t" style="left:5.94px;top:623.66px;font-size:11.80px;color:#7fd3c7;">98</div>
<div class="b" style="left:0px;top:657px;width:25px;height:1px;background:#5d5a58;"></div>
<div class="t" style="left:5.94px;top:640.66px;font-size:11.80px;color:#7fd3c7;">99</div>
<div class="b" style="left:0px;top:674px;width:25px;height:1px;background:#5d5a58;"></div>
<div class="t" style="left:2.66px;top:657.66px;font-size:11.80px;color:#7fd3c7;">100</div>
<div class="b" style="left:0px;top:691px;width:25px;height:1px;background:#5d5a58;"></div>
<div class="t" style="left:2.66px;top:674.66px;font-size:11.80px;color:#7fd3c7;">101</div>
<div class="b" style="left:0px;top:708px;width:25px;height:1px;background:#5d5a58;"></div>
<div class="t" style="left:2.66px;top:691.66px;font-size:11.80px;color:#7fd3c7;">102</div>
<div class="b" style="left:0px;top:725px;width:25px;height:1px;background:#5d5a58;"></div>
<div class="t" style="left:2.66px;top:708.66px;font-size:11.80px;color:#7fd3c7;">103</div>
<div class="b" style="left:0px;top:742px;width:25px;height:1px;background:#5d5a58;"></div>
<div class="t" style="left:2.66px;top:725.66px;font-size:11.80px;color:#7fd3c7;">104</div>
<div class="b" style="left:0px;top:759px;width:25px;height:1px;background:#5d5a58;"></div>
<div class="t" style="left:2.66px;top:742.66px;font-size:11.80px;color:#7fd3c7;">105</div>
<div class="b" style="left:0px;top:776px;width:25px;height:1px;background:#5d5a58;"></div>
<div class="t" style="left:2.66px;top:759.66px;font-size:11.80px;color:#7fd3c7;">106</div>
<div class="b" style="left:0px;top:793px;width:25px;height:1px;background:#5d5a58;"></div>
<div class="t" style="left:2.66px;top:776.66px;font-size:11.80px;color:#7fd3c7;">107</div>
<div class="b" style="left:0px;top:810px;width:25px;height:1px;background:#5d5a58;"></div>
<div class="t" style="left:2.66px;top:793.66px;font-size:11.80px;color:#7fd3c7;">108</div>
<div class="b" style="left:0px;top:827px;width:25px;height:1px;background:#5d5a58;"></div>
<div class="t" style="left:2.66px;top:810.66px;font-size:11.80px;color:#7fd3c7;">109</div>
<div class="b" style="left:0px;top:844px;width:25px;height:1px;background:#5d5a58;"></div>
<div class="t" style="left:3.09px;top:827.66px;font-size:11.80px;color:#7fd3c7;">110</div>
<div class="b" style="left:0px;top:861px;width:25px;height:1px;background:#5d5a58;"></div>
<div class="t" style="left:3.53px;top:844.66px;font-size:11.80px;color:#7fd3c7;">111</div>
<div class="b" style="left:0px;top:878px;width:25px;height:1px;background:#5d5a58;"></div>
<div class="t" style="left:3.09px;top:861.66px;font-size:11.80px;color:#7fd3c7;">112</div>
<div class="b" style="left:0px;top:895px;width:25px;height:1px;background:#5d5a58;"></div>
<div class="t" style="left:3.09px;top:878.66px;font-size:11.80px;color:#7fd3c7;">113</div>
<div class="b" style="left:0px;top:912px;width:25px;height:1px;background:#5d5a58;"></div>
<div class="t" style="left:3.09px;top:895.66px;font-size:11.80px;color:#7fd3c7;">114</div>
<div class="b" style="left:0px;top:929px;width:25px;height:1px;background:#5d5a58;"></div>
<div class="t" style="left:3.09px;top:912.66px;font-size:11.80px;color:#7fd3c7;">115</div>
<div class="b" style="left:0px;top:946px;width:25px;height:1px;background:#5d5a58;"></div>
<div class="t" style="left:3.09px;top:929.66px;font-size:11.80px;color:#7fd3c7;">116</div>
<div class="b" style="left:0px;top:963px;width:25px;height:1px;background:#5d5a58;"></div>
<div class="t" style="left:3.09px;top:946.66px;font-size:11.80px;color:#7fd3c7;">117</div>
<div class="b" style="left:0px;top:980px;width:25px;height:1px;background:#5d5a58;"></div>
<div class="t" style="left:3.09px;top:963.66px;font-size:11.80px;color:#7fd3c7;">118</div>
<div class="b" style="left:0px;top:315px;width:25px;height:1px;background:#5d5a58;"></div>
<div class="b" style="left:156.5px;top:253px;width:184px;height:1px;background:#e4e4e4;"></div>
<div class="b" style="left:156.5px;top:269px;width:184px;height:1px;background:#e4e4e4;"></div>
<div class="b" style="left:270px;top:237px;width:1px;height:81px;background:#e4e4e4;"></div>
<div class="b" style="left:340.5px;top:253px;width:751.5px;height:65px;background:#a9d08e;"></div>
<div class="b" style="left:53px;top:237px;width:35px;height:81px;background:#000;"></div>
<div style="position:absolute;left:53px;top:237px;width:35px;height:32px;overflow:hidden"><div class="t" style="left:-4px;top:-1.6px;font-size:13px;color:#fff;font-weight:bold">NG GI</div><div class="t" style="left:-2px;top:14.4px;font-size:13px;color:#fff;font-weight:bold">UTA L</div></div>
<div class="b" style="left:25px;top:285px;width:28px;height:1px;background:#8c8c8c;"></div>
<div class="b" style="left:88px;top:285px;width:1810px;height:1px;background:#8c8c8c;"></div>
<div class="t" style="left:32.00px;top:266.84px;font-size:14.20px;color:#111;transform:scaleX(0.9158);">No</div>
<div class="t" style="left:348.25px;top:267.34px;font-size:14.20px;color:#111;font-weight:bold;transform:scaleX(0.8969);">TANGGAL</div>
<div class="t" style="left:517.00px;top:267.34px;font-size:14.20px;color:#111;font-weight:bold;transform:scaleX(0.8686);">KETERANGAN</div>
<div class="t" style="left:734.00px;top:267.34px;font-size:14.20px;color:#111;font-weight:bold;transform:scaleX(0.8964);">DB (Masuk)</div>
<div class="t" style="left:863.00px;top:267.34px;font-size:14.20px;color:#111;font-weight:bold;transform:scaleX(0.9220);">CR (Keluar)</div>
<div class="t" style="left:1006.00px;top:267.34px;font-size:14.20px;color:#111;font-weight:bold;transform:scaleX(0.8855);">SALDO</div>
<div class="t" style="left:1116.00px;top:267.34px;font-size:14.20px;color:#111;transform:scaleX(0.9105);">Bunga bank</div>
<div class="t" style="left:1235.75px;top:267.34px;font-size:14.20px;color:#111;transform:scaleX(0.8947);">Penjualan</div>
<div class="t" style="left:1331.50px;top:267.34px;font-size:14.20px;color:#111;transform:scaleX(0.9363);">Ayat Silang</div>
<div class="t" style="left:765.00px;top:283.34px;font-size:14.20px;color:#111;font-weight:bold;transform:scaleX(0.9008);">68.789.000</div>
<div class="t" style="left:893.00px;top:283.34px;font-size:14.20px;color:#111;font-weight:bold;transform:scaleX(0.8867);">69.362.155</div>
<svg class="s" style="left:702px;top:286px;" width="7" height="7" viewBox="0 0 7 7" fill="none"><path d="M0 0 H6 L0 6 Z" fill="#1a8a3a"/></svg>
<svg class="s" style="left:836px;top:286px;" width="7" height="7" viewBox="0 0 7 7" fill="none"><path d="M0 0 H6 L0 6 Z" fill="#1a8a3a"/></svg>
<div class="t" style="left:159.25px;top:299.34px;font-size:14.20px;color:#111;transform:scaleX(0.9099);">No Voucher</div>
<div class="t" style="left:273.00px;top:299.34px;font-size:14.20px;color:#111;transform:scaleX(0.9021);">COA</div>
<div class="b" style="left:72px;top:301.5px;width:15.5px;height:16px;background:#fafafa;box-sizing:border-box;border:1px solid #a9aea8;"></div><svg class="s" style="left:76.5px;top:307.5px;" width="7" height="3" viewBox="0 0 7 3" fill="none"><path d="M0.3 0.3 H6.7 V1.2 L4.5 2.8 H2.5 L0.3 1.2 Z" fill="#4a4a4a"/></svg>
<div class="b" style="left:140px;top:301.5px;width:15.5px;height:16px;background:#fafafa;box-sizing:border-box;border:1px solid #a9aea8;"></div><svg class="s" style="left:144.5px;top:307.5px;" width="7" height="3" viewBox="0 0 7 3" fill="none"><path d="M0.3 0.3 H6.7 V1.2 L4.5 2.8 H2.5 L0.3 1.2 Z" fill="#4a4a4a"/></svg>
<div class="b" style="left:254.5px;top:301.5px;width:15.5px;height:16px;background:#fafafa;box-sizing:border-box;border:1px solid #a9aea8;"></div><svg class="s" style="left:259px;top:307.5px;" width="7" height="3" viewBox="0 0 7 3" fill="none"><path d="M0.3 0.3 H6.7 V1.2 L4.5 2.8 H2.5 L0.3 1.2 Z" fill="#4a4a4a"/></svg>
<div class="b" style="left:324.5px;top:301.5px;width:15.5px;height:16px;background:#fafafa;box-sizing:border-box;border:1px solid #a9aea8;"></div><svg class="s" style="left:329px;top:307.5px;" width="7" height="3" viewBox="0 0 7 3" fill="none"><path d="M0.3 0.3 H6.7 V1.2 L4.5 2.8 H2.5 L0.3 1.2 Z" fill="#4a4a4a"/></svg>
<div class="b" style="left:403px;top:301.5px;width:15.5px;height:16px;background:#fafafa;box-sizing:border-box;border:1px solid #a9aea8;"></div><svg class="s" style="left:406px;top:304px;" width="11" height="10" viewBox="0 0 11 10" fill="none"><path d="M4 1 H10.5 L8 4 V8.5 H6.5 V4 Z" fill="#555"/><path d="M0.5 5.5 H5 L2.75 8.5 Z" fill="#555"/></svg>
<div class="b" style="left:686.5px;top:301.5px;width:15.5px;height:16px;background:#fafafa;box-sizing:border-box;border:1px solid #a9aea8;"></div><svg class="s" style="left:691px;top:307.5px;" width="7" height="3" viewBox="0 0 7 3" fill="none"><path d="M0.3 0.3 H6.7 V1.2 L4.5 2.8 H2.5 L0.3 1.2 Z" fill="#4a4a4a"/></svg>
<div class="b" style="left:819.5px;top:301.5px;width:15.5px;height:16px;background:#fafafa;box-sizing:border-box;border:1px solid #a9aea8;"></div><svg class="s" style="left:824px;top:307.5px;" width="7" height="3" viewBox="0 0 7 3" fill="none"><path d="M0.3 0.3 H6.7 V1.2 L4.5 2.8 H2.5 L0.3 1.2 Z" fill="#4a4a4a"/></svg>
<div class="b" style="left:946.5px;top:301.5px;width:15.5px;height:16px;background:#fafafa;box-sizing:border-box;border:1px solid #a9aea8;"></div><svg class="s" style="left:951px;top:307.5px;" width="7" height="3" viewBox="0 0 7 3" fill="none"><path d="M0.3 0.3 H6.7 V1.2 L4.5 2.8 H2.5 L0.3 1.2 Z" fill="#4a4a4a"/></svg>
<div class="b" style="left:1076.5px;top:301.5px;width:15.5px;height:16px;background:#fafafa;box-sizing:border-box;border:1px solid #a9aea8;"></div><svg class="s" style="left:1081px;top:307.5px;" width="7" height="3" viewBox="0 0 7 3" fill="none"><path d="M0.3 0.3 H6.7 V1.2 L4.5 2.8 H2.5 L0.3 1.2 Z" fill="#4a4a4a"/></svg>
<div class="b" style="left:1192px;top:301.5px;width:15.5px;height:16px;background:#fafafa;box-sizing:border-box;border:1px solid #a9aea8;"></div><svg class="s" style="left:1196.5px;top:307.5px;" width="7" height="3" viewBox="0 0 7 3" fill="none"><path d="M0.3 0.3 H6.7 V1.2 L4.5 2.8 H2.5 L0.3 1.2 Z" fill="#4a4a4a"/></svg>
<div class="b" style="left:1306px;top:301.5px;width:15.5px;height:16px;background:#fafafa;box-sizing:border-box;border:1px solid #a9aea8;"></div><svg class="s" style="left:1310.5px;top:307.5px;" width="7" height="3" viewBox="0 0 7 3" fill="none"><path d="M0.3 0.3 H6.7 V1.2 L4.5 2.8 H2.5 L0.3 1.2 Z" fill="#4a4a4a"/></svg>
<div class="b" style="left:1393.5px;top:301.5px;width:15.5px;height:16px;background:#fafafa;box-sizing:border-box;border:1px solid #a9aea8;"></div><svg class="s" style="left:1398px;top:307.5px;" width="7" height="3" viewBox="0 0 7 3" fill="none"><path d="M0.3 0.3 H6.7 V1.2 L4.5 2.8 H2.5 L0.3 1.2 Z" fill="#4a4a4a"/></svg>
<div class="b" style="left:1760.5px;top:301.5px;width:15.5px;height:16px;background:#fafafa;box-sizing:border-box;border:1px solid #a9aea8;"></div><svg class="s" style="left:1765px;top:307.5px;" width="7" height="3" viewBox="0 0 7 3" fill="none"><path d="M0.3 0.3 H6.7 V1.2 L4.5 2.8 H2.5 L0.3 1.2 Z" fill="#4a4a4a"/></svg>
<div class="b" style="left:1092px;top:317px;width:117px;height:2px;background:#1c6540;"></div>
<div class="b" style="left:88px;top:318px;width:68.5px;height:17px;background:#fce4d6;"></div>
<div class="b" style="left:53px;top:334px;width:35px;height:1px;background:#e4e4e4;"></div>
<div class="b" style="left:156.5px;top:334px;width:935.5px;height:1px;background:#e4e4e4;"></div>
<div class="b" style="left:1410px;top:334px;width:366px;height:1px;background:#e4e4e4;"></div>
<div class="t" style="left:36.04px;top:316.04px;font-size:14.20px;color:#000;transform:scaleX(0.9158);">74</div>
<div class="t" style="left:71.60px;top:316.04px;font-size:14.20px;color:#000;transform:scaleX(0.8821);">11</div>
<div class="t" style="left:90.90px;top:316.04px;font-size:14.20px;color:#000;transform:scaleX(0.8521);">November</div>
<div class="t" style="left:158.20px;top:316.04px;font-size:14.20px;color:#000;transform:scaleX(0.8993);">SDL-BM-1125-001</div>
<div class="t" style="left:273.20px;top:316.04px;font-size:14.20px;color:#000;transform:scaleX(0.9158);">4000.01</div>
<div class="t" style="left:343.40px;top:316.04px;font-size:14.20px;color:#000;transform:scaleX(0.9158);">01/11/2025</div>
<div class="t" style="left:420.20px;top:316.04px;font-size:14.20px;color:#000;transform:scaleX(0.9295);">PAK PARTO BLN OKT 25</div>
<div class="t" style="left:781.81px;top:316.04px;font-size:14.20px;color:#000;transform:scaleX(0.9158);">500.000</div>
<div class="t" style="left:937.67px;top:316.04px;font-size:14.20px;color:#000;transform:scaleX(0.9158);">-</div>
<div class="t" style="left:1013.59px;top:316.04px;font-size:14.20px;color:#000;transform:scaleX(0.9158);">6.660.667,00</div>
<div class="t" style="left:1249.23px;top:316.04px;font-size:14.20px;color:#000;transform:scaleX(0.9158);">500.000,00</div>
<div class="b" style="left:88px;top:335px;width:68.5px;height:17px;background:#fce4d6;"></div>
<div class="b" style="left:53px;top:351px;width:35px;height:1px;background:#e4e4e4;"></div>
<div class="b" style="left:156.5px;top:351px;width:935.5px;height:1px;background:#e4e4e4;"></div>
<div class="b" style="left:1410px;top:351px;width:366px;height:1px;background:#e4e4e4;"></div>
<div class="t" style="left:36.04px;top:333.04px;font-size:14.20px;color:#000;transform:scaleX(0.9158);">75</div>
<div class="t" style="left:71.60px;top:333.04px;font-size:14.20px;color:#000;transform:scaleX(0.8821);">11</div>
<div class="t" style="left:90.90px;top:333.04px;font-size:14.20px;color:#000;transform:scaleX(0.8521);">November</div>
<div class="t" style="left:158.20px;top:333.04px;font-size:14.20px;color:#000;transform:scaleX(0.9178);">SDL-BK-1125-001</div>
<div class="t" style="left:273.20px;top:333.04px;font-size:14.20px;color:#000;transform:scaleX(0.9158);">5100</div>
<svg class="s" style="left:271px;top:336px;" width="6" height="6" viewBox="0 0 6 6" fill="none"><path d="M0 0 H5.5 L0 5.5 Z" fill="#1a8a3a"/></svg>
<div class="t" style="left:343.40px;top:333.04px;font-size:14.20px;color:#000;transform:scaleX(0.9158);">01/11/2025</div>
<div class="t" style="left:420.20px;top:333.04px;font-size:14.20px;color:#000;transform:scaleX(0.9295);">RUTER ACP 6LBR</div>
<div class="t" style="left:810.67px;top:333.04px;font-size:14.20px;color:#000;transform:scaleX(0.9158);">-</div>
<div class="t" style="left:880.09px;top:333.04px;font-size:14.20px;color:#000;transform:scaleX(0.9158);">1.050.000,00</div>
<div class="t" style="left:1013.59px;top:333.04px;font-size:14.20px;color:#000;transform:scaleX(0.9158);">5.610.667,00</div>
<div class="t" style="left:1296.67px;top:333.04px;font-size:14.20px;color:#000;transform:scaleX(0.9158);">-</div>
<div class="b" style="left:88px;top:352px;width:68.5px;height:17px;background:#fce4d6;"></div>
<div class="b" style="left:53px;top:368px;width:35px;height:1px;background:#e4e4e4;"></div>
<div class="b" style="left:156.5px;top:368px;width:935.5px;height:1px;background:#e4e4e4;"></div>
<div class="b" style="left:1410px;top:368px;width:366px;height:1px;background:#e4e4e4;"></div>
<div class="t" style="left:36.04px;top:350.04px;font-size:14.20px;color:#000;transform:scaleX(0.9158);">76</div>
<div class="t" style="left:71.60px;top:350.04px;font-size:14.20px;color:#000;transform:scaleX(0.8821);">11</div>
<div class="t" style="left:90.90px;top:350.04px;font-size:14.20px;color:#000;transform:scaleX(0.8521);">November</div>
<div class="t" style="left:158.20px;top:350.04px;font-size:14.20px;color:#000;transform:scaleX(0.9178);">SDL-BK-1125-002</div>
<div class="t" style="left:273.20px;top:350.04px;font-size:14.20px;color:#000;transform:scaleX(0.9158);">2200</div>
<svg class="s" style="left:271px;top:353px;" width="6" height="6" viewBox="0 0 6 6" fill="none"><path d="M0 0 H5.5 L0 5.5 Z" fill="#1a8a3a"/></svg>
<div class="t" style="left:343.40px;top:350.04px;font-size:14.20px;color:#000;transform:scaleX(0.9158);">01/11/2025</div>
<div class="t" style="left:420.20px;top:350.04px;font-size:14.20px;color:#000;transform:scaleX(0.9295);">KASBON SUBRO</div>
<div class="t" style="left:810.67px;top:350.04px;font-size:14.20px;color:#000;transform:scaleX(0.9158);">-</div>
<div class="t" style="left:880.09px;top:350.04px;font-size:14.20px;color:#000;transform:scaleX(0.9158);">1.500.000,00</div>
<div class="t" style="left:1014.56px;top:350.04px;font-size:14.20px;color:#000;transform:scaleX(0.9158);">4.110.667,00</div>
<div class="t" style="left:1296.67px;top:350.04px;font-size:14.20px;color:#000;transform:scaleX(0.9158);">-</div>
<div class="b" style="left:88px;top:369px;width:68.5px;height:17px;background:#fce4d6;"></div>
<div class="b" style="left:53px;top:385px;width:35px;height:1px;background:#e4e4e4;"></div>
<div class="b" style="left:156.5px;top:385px;width:935.5px;height:1px;background:#e4e4e4;"></div>
<div class="b" style="left:1410px;top:385px;width:366px;height:1px;background:#e4e4e4;"></div>
<div class="t" style="left:36.04px;top:367.04px;font-size:14.20px;color:#000;transform:scaleX(0.9158);">77</div>
<div class="t" style="left:71.60px;top:367.04px;font-size:14.20px;color:#000;transform:scaleX(0.8821);">11</div>
<div class="t" style="left:90.90px;top:367.04px;font-size:14.20px;color:#000;transform:scaleX(0.8521);">November</div>
<div class="t" style="left:158.20px;top:367.04px;font-size:14.20px;color:#000;transform:scaleX(0.9178);">SDL-BK-1125-003</div>
<div class="t" style="left:273.20px;top:367.04px;font-size:14.20px;color:#000;transform:scaleX(0.9158);">ayat silang</div>
<div class="t" style="left:343.40px;top:367.04px;font-size:14.20px;color:#000;transform:scaleX(0.9158);">01/11/2025</div>
<div class="t" style="left:420.20px;top:367.04px;font-size:14.20px;color:#000;transform:scaleX(0.9295);">TARIK TUNAI</div>
<div class="t" style="left:810.67px;top:367.04px;font-size:14.20px;color:#000;transform:scaleX(0.9158);">-</div>
<div class="t" style="left:880.09px;top:367.04px;font-size:14.20px;color:#000;transform:scaleX(0.9158);">3.000.000,00</div>
<div class="t" style="left:1014.56px;top:367.04px;font-size:14.20px;color:#000;transform:scaleX(0.9158);">1.110.667,00</div>
<div class="t" style="left:1296.67px;top:367.04px;font-size:14.20px;color:#000;transform:scaleX(0.9158);">-</div>
<div class="b" style="left:88px;top:386px;width:68.5px;height:17px;background:#fce4d6;"></div>
<div class="b" style="left:53px;top:402px;width:35px;height:1px;background:#e4e4e4;"></div>
<div class="b" style="left:156.5px;top:402px;width:935.5px;height:1px;background:#e4e4e4;"></div>
<div class="b" style="left:1410px;top:402px;width:366px;height:1px;background:#e4e4e4;"></div>
<div class="t" style="left:36.04px;top:384.04px;font-size:14.20px;color:#000;transform:scaleX(0.9158);">78</div>
<div class="t" style="left:71.60px;top:384.04px;font-size:14.20px;color:#000;transform:scaleX(0.8821);">11</div>
<div class="t" style="left:90.90px;top:384.04px;font-size:14.20px;color:#000;transform:scaleX(0.8521);">November</div>
<div class="t" style="left:158.20px;top:384.04px;font-size:14.20px;color:#000;transform:scaleX(0.8993);">SDL-BM-1125-002</div>
<div class="t" style="left:273.20px;top:384.04px;font-size:14.20px;color:#000;transform:scaleX(0.9158);">4000.01</div>
<div class="t" style="left:343.40px;top:384.04px;font-size:14.20px;color:#000;transform:scaleX(0.9158);">03/11/2025</div>
<div class="t" style="left:420.20px;top:384.04px;font-size:14.20px;color:#000;transform:scaleX(0.9295);">CICILAN PAK ANWAR</div>
<div class="t" style="left:763.73px;top:384.04px;font-size:14.20px;color:#000;transform:scaleX(0.9158);">10.000.000</div>
<div class="t" style="left:937.67px;top:384.04px;font-size:14.20px;color:#000;transform:scaleX(0.9158);">-</div>
<div class="t" style="left:1008.29px;top:384.04px;font-size:14.20px;color:#000;transform:scaleX(0.9158);">11.110.667,00</div>
<div class="t" style="left:1231.16px;top:384.04px;font-size:14.20px;color:#000;transform:scaleX(0.9158);">10.000.000,00</div>
<div class="b" style="left:88px;top:403px;width:68.5px;height:17px;background:#fce4d6;"></div>
<div class="b" style="left:53px;top:419px;width:35px;height:1px;background:#e4e4e4;"></div>
<div class="b" style="left:156.5px;top:419px;width:935.5px;height:1px;background:#e4e4e4;"></div>
<div class="b" style="left:1410px;top:419px;width:366px;height:1px;background:#e4e4e4;"></div>
<div class="t" style="left:36.04px;top:401.04px;font-size:14.20px;color:#000;transform:scaleX(0.9158);">79</div>
<div class="t" style="left:71.60px;top:401.04px;font-size:14.20px;color:#000;transform:scaleX(0.8821);">11</div>
<div class="t" style="left:90.90px;top:401.04px;font-size:14.20px;color:#000;transform:scaleX(0.8521);">November</div>
<div class="t" style="left:158.20px;top:401.04px;font-size:14.20px;color:#000;transform:scaleX(0.9178);">SDL-BK-1125-004</div>
<div class="t" style="left:273.20px;top:401.04px;font-size:14.20px;color:#000;transform:scaleX(0.9158);">1300</div>
<svg class="s" style="left:271px;top:404px;" width="6" height="6" viewBox="0 0 6 6" fill="none"><path d="M0 0 H5.5 L0 5.5 Z" fill="#1a8a3a"/></svg>
<div class="t" style="left:343.40px;top:401.04px;font-size:14.20px;color:#000;transform:scaleX(0.9158);">03/11/2025</div>
<div class="t" style="left:420.20px;top:401.04px;font-size:14.20px;color:#000;transform:scaleX(0.9295);">BAGIAN AUDIT</div>
<div class="t" style="left:810.67px;top:401.04px;font-size:14.20px;color:#000;transform:scaleX(0.9158);">-</div>
<div class="t" style="left:872.86px;top:401.04px;font-size:14.20px;color:#000;transform:scaleX(0.9158);">10.650.000,00</div>
<div class="t" style="left:1024.43px;top:401.04px;font-size:14.20px;color:#000;transform:scaleX(0.9158);">460.667,00</div>
<div class="t" style="left:1296.67px;top:401.04px;font-size:14.20px;color:#000;transform:scaleX(0.9158);">-</div>
<div class="b" style="left:88px;top:420px;width:68.5px;height:17px;background:#fce4d6;"></div>
<div class="b" style="left:53px;top:436px;width:35px;height:1px;background:#e4e4e4;"></div>
<div class="b" style="left:156.5px;top:436px;width:935.5px;height:1px;background:#e4e4e4;"></div>
<div class="b" style="left:1410px;top:436px;width:366px;height:1px;background:#e4e4e4;"></div>
<div class="t" style="left:36.04px;top:418.04px;font-size:14.20px;color:#000;transform:scaleX(0.9158);">80</div>
<div class="t" style="left:71.60px;top:418.04px;font-size:14.20px;color:#000;transform:scaleX(0.8821);">11</div>
<div class="t" style="left:90.90px;top:418.04px;font-size:14.20px;color:#000;transform:scaleX(0.8521);">November</div>
<div class="t" style="left:158.20px;top:418.04px;font-size:14.20px;color:#000;transform:scaleX(0.8993);">SDL-BM-1125-003</div>
<div class="t" style="left:273.20px;top:418.04px;font-size:14.20px;color:#000;transform:scaleX(0.9158);">4000.01</div>
<div class="t" style="left:343.40px;top:418.04px;font-size:14.20px;color:#000;transform:scaleX(0.9158);">04/11/2025</div>
<div class="t" style="left:420.20px;top:418.04px;font-size:14.20px;color:#000;transform:scaleX(0.9295);">CICILAN PAK SURYA</div>
<div class="t" style="left:770.97px;top:418.04px;font-size:14.20px;color:#000;transform:scaleX(0.9158);">4.000.000</div>
<div class="t" style="left:937.67px;top:418.04px;font-size:14.20px;color:#000;transform:scaleX(0.9158);">-</div>
<div class="t" style="left:1013.59px;top:418.04px;font-size:14.20px;color:#000;transform:scaleX(0.9158);">4.460.667,00</div>
<div class="t" style="left:1238.39px;top:418.04px;font-size:14.20px;color:#000;transform:scaleX(0.9158);">4.000.000,00</div>
<div class="b" style="left:88px;top:437px;width:68.5px;height:17px;background:#fce4d6;"></div>
<div class="b" style="left:53px;top:453px;width:35px;height:1px;background:#e4e4e4;"></div>
<div class="b" style="left:156.5px;top:453px;width:935.5px;height:1px;background:#e4e4e4;"></div>
<div class="b" style="left:1410px;top:453px;width:366px;height:1px;background:#e4e4e4;"></div>
<div class="t" style="left:36.04px;top:435.04px;font-size:14.20px;color:#000;transform:scaleX(0.9158);">81</div>
<div class="t" style="left:71.60px;top:435.04px;font-size:14.20px;color:#000;transform:scaleX(0.8821);">11</div>
<div class="t" style="left:90.90px;top:435.04px;font-size:14.20px;color:#000;transform:scaleX(0.8521);">November</div>
<div class="t" style="left:158.20px;top:435.04px;font-size:14.20px;color:#000;transform:scaleX(0.8993);">SDL-BM-1125-004</div>
<div class="t" style="left:273.20px;top:435.04px;font-size:14.20px;color:#000;transform:scaleX(0.9158);">AYAT SILA</div>
<div class="t" style="left:343.40px;top:435.04px;font-size:14.20px;color:#000;transform:scaleX(0.9158);">05/11/2025</div>
<div class="t" style="left:420.20px;top:435.04px;font-size:14.20px;color:#000;transform:scaleX(0.9295);">SDL KASBON KE PAK BOS</div>
<div class="t" style="left:770.97px;top:435.04px;font-size:14.20px;color:#000;transform:scaleX(0.9158);">3.000.000</div>
<div class="t" style="left:937.67px;top:435.04px;font-size:14.20px;color:#000;transform:scaleX(0.9158);">-</div>
<div class="t" style="left:1013.59px;top:435.04px;font-size:14.20px;color:#000;transform:scaleX(0.9158);">7.460.667,00</div>
<div class="t" style="left:1238.39px;top:435.04px;font-size:14.20px;color:#000;transform:scaleX(0.9158);">3.000.000,00</div>
<div class="b" style="left:88px;top:454px;width:68.5px;height:17px;background:#fce4d6;"></div>
<div class="b" style="left:53px;top:470px;width:35px;height:1px;background:#e4e4e4;"></div>
<div class="b" style="left:156.5px;top:470px;width:935.5px;height:1px;background:#e4e4e4;"></div>
<div class="b" style="left:1410px;top:470px;width:366px;height:1px;background:#e4e4e4;"></div>
<div class="t" style="left:36.04px;top:452.04px;font-size:14.20px;color:#000;transform:scaleX(0.9158);">82</div>
<div class="t" style="left:71.60px;top:452.04px;font-size:14.20px;color:#000;transform:scaleX(0.8821);">11</div>
<div class="t" style="left:90.90px;top:452.04px;font-size:14.20px;color:#000;transform:scaleX(0.8521);">November</div>
<div class="t" style="left:158.20px;top:452.04px;font-size:14.20px;color:#000;transform:scaleX(0.9178);">SDL-BK-1125-005</div>
<div class="t" style="left:273.20px;top:452.04px;font-size:14.20px;color:#000;transform:scaleX(0.9158);">5100</div>
<svg class="s" style="left:271px;top:455px;" width="6" height="6" viewBox="0 0 6 6" fill="none"><path d="M0 0 H5.5 L0 5.5 Z" fill="#1a8a3a"/></svg>
<div class="t" style="left:343.40px;top:452.04px;font-size:14.20px;color:#000;transform:scaleX(0.9158);">05/11/2025</div>
<div class="t" style="left:420.20px;top:452.04px;font-size:14.20px;color:#000;transform:scaleX(0.9295);">BELI AKRILIK 3MM,8 LBR</div>
<div class="t" style="left:810.67px;top:452.04px;font-size:14.20px;color:#000;transform:scaleX(0.9158);">-</div>
<div class="t" style="left:880.09px;top:452.04px;font-size:14.20px;color:#000;transform:scaleX(0.9158);">5.200.000,00</div>
<div class="t" style="left:1013.59px;top:452.04px;font-size:14.20px;color:#000;transform:scaleX(0.9158);">2.260.667,00</div>
<div class="t" style="left:1296.67px;top:452.04px;font-size:14.20px;color:#000;transform:scaleX(0.9158);">-</div>
<div class="b" style="left:88px;top:471px;width:68.5px;height:17px;background:#fce4d6;"></div>
<div class="b" style="left:53px;top:487px;width:35px;height:1px;background:#e4e4e4;"></div>
<div class="b" style="left:156.5px;top:487px;width:935.5px;height:1px;background:#e4e4e4;"></div>
<div class="b" style="left:1410px;top:487px;width:366px;height:1px;background:#e4e4e4;"></div>
<div class="t" style="left:36.04px;top:469.04px;font-size:14.20px;color:#000;transform:scaleX(0.9158);">83</div>
<div class="t" style="left:71.60px;top:469.04px;font-size:14.20px;color:#000;transform:scaleX(0.8821);">11</div>
<div class="t" style="left:90.90px;top:469.04px;font-size:14.20px;color:#000;transform:scaleX(0.8521);">November</div>
<div class="t" style="left:158.20px;top:469.04px;font-size:14.20px;color:#000;transform:scaleX(0.8993);">SDL-BM-1125-005</div>
<div class="t" style="left:273.20px;top:469.04px;font-size:14.20px;color:#000;transform:scaleX(0.9158);">4000.01</div>
<div class="t" style="left:343.40px;top:469.04px;font-size:14.20px;color:#000;transform:scaleX(0.9158);">05/11/2025</div>
<div class="t" style="left:420.20px;top:469.04px;font-size:14.20px;color:#000;transform:scaleX(0.9295);">PAK GERY</div>
<div class="t" style="left:781.81px;top:469.04px;font-size:14.20px;color:#000;transform:scaleX(0.9158);">850.000</div>
<div class="t" style="left:937.67px;top:469.04px;font-size:14.20px;color:#000;transform:scaleX(0.9158);">-</div>
<div class="t" style="left:1014.56px;top:469.04px;font-size:14.20px;color:#000;transform:scaleX(0.9158);">3.110.667,00</div>
<div class="t" style="left:1249.23px;top:469.04px;font-size:14.20px;color:#000;transform:scaleX(0.9158);">850.000,00</div>
<div class="b" style="left:88px;top:488px;width:68.5px;height:17px;background:#fce4d6;"></div>
<div class="b" style="left:53px;top:504px;width:35px;height:1px;background:#e4e4e4;"></div>
<div class="b" style="left:156.5px;top:504px;width:935.5px;height:1px;background:#e4e4e4;"></div>
<div class="b" style="left:1410px;top:504px;width:366px;height:1px;background:#e4e4e4;"></div>
<div class="t" style="left:36.04px;top:486.04px;font-size:14.20px;color:#000;transform:scaleX(0.9158);">84</div>
<div class="t" style="left:71.60px;top:486.04px;font-size:14.20px;color:#000;transform:scaleX(0.8821);">11</div>
<div class="t" style="left:90.90px;top:486.04px;font-size:14.20px;color:#000;transform:scaleX(0.8521);">November</div>
<div class="t" style="left:158.20px;top:486.04px;font-size:14.20px;color:#000;transform:scaleX(0.9178);">SDL-BK-1125-006</div>
<div class="t" style="left:273.20px;top:486.04px;font-size:14.20px;color:#000;transform:scaleX(0.9158);">ayat silang</div>
<div class="t" style="left:343.40px;top:486.04px;font-size:14.20px;color:#000;transform:scaleX(0.9158);">07/11/2025</div>
<div class="t" style="left:420.20px;top:486.04px;font-size:14.20px;color:#000;transform:scaleX(0.9295);">TARIK TUNAI</div>
<div class="t" style="left:810.67px;top:486.04px;font-size:14.20px;color:#000;transform:scaleX(0.9158);">-</div>
<div class="t" style="left:880.09px;top:486.04px;font-size:14.20px;color:#000;transform:scaleX(0.9158);">1.000.000,00</div>
<div class="t" style="left:1014.56px;top:486.04px;font-size:14.20px;color:#000;transform:scaleX(0.9158);">2.110.667,00</div>
<div class="t" style="left:1296.67px;top:486.04px;font-size:14.20px;color:#000;transform:scaleX(0.9158);">-</div>
<div class="b" style="left:88px;top:505px;width:68.5px;height:17px;background:#fce4d6;"></div>
<div class="b" style="left:53px;top:521px;width:35px;height:1px;background:#e4e4e4;"></div>
<div class="b" style="left:156.5px;top:521px;width:935.5px;height:1px;background:#e4e4e4;"></div>
<div class="b" style="left:1410px;top:521px;width:366px;height:1px;background:#e4e4e4;"></div>
<div class="t" style="left:36.04px;top:503.04px;font-size:14.20px;color:#000;transform:scaleX(0.9158);">85</div>
<div class="t" style="left:71.60px;top:503.04px;font-size:14.20px;color:#000;transform:scaleX(0.8821);">11</div>
<div class="t" style="left:90.90px;top:503.04px;font-size:14.20px;color:#000;transform:scaleX(0.8521);">November</div>
<div class="t" style="left:158.20px;top:503.04px;font-size:14.20px;color:#000;transform:scaleX(0.8993);">SDL-BM-1125-006</div>
<div class="t" style="left:273.20px;top:503.04px;font-size:14.20px;color:#000;transform:scaleX(0.9158);">4000.01</div>
<div class="t" style="left:343.40px;top:503.04px;font-size:14.20px;color:#000;transform:scaleX(0.9158);">07/11/2025</div>
<div class="t" style="left:420.20px;top:503.04px;font-size:14.20px;color:#000;transform:scaleX(0.9295);">DJL BLN AGUST 25</div>
<div class="t" style="left:770.97px;top:503.04px;font-size:14.20px;color:#000;transform:scaleX(0.9158);">8.900.000</div>
<div class="t" style="left:937.67px;top:503.04px;font-size:14.20px;color:#000;transform:scaleX(0.9158);">-</div>
<div class="t" style="left:1007.33px;top:503.04px;font-size:14.20px;color:#000;transform:scaleX(0.9158);">11.010.667,00</div>
<div class="t" style="left:1238.39px;top:503.04px;font-size:14.20px;color:#000;transform:scaleX(0.9158);">8.900.000,00</div>
<div class="b" style="left:88px;top:522px;width:68.5px;height:17px;background:#fce4d6;"></div>
<div class="b" style="left:53px;top:538px;width:35px;height:1px;background:#e4e4e4;"></div>
<div class="b" style="left:156.5px;top:538px;width:935.5px;height:1px;background:#e4e4e4;"></div>
<div class="b" style="left:1410px;top:538px;width:366px;height:1px;background:#e4e4e4;"></div>
<div class="t" style="left:36.04px;top:520.04px;font-size:14.20px;color:#000;transform:scaleX(0.9158);">86</div>
<div class="t" style="left:71.60px;top:520.04px;font-size:14.20px;color:#000;transform:scaleX(0.8821);">11</div>
<div class="t" style="left:90.90px;top:520.04px;font-size:14.20px;color:#000;transform:scaleX(0.8521);">November</div>
<div class="t" style="left:158.20px;top:520.04px;font-size:14.20px;color:#000;transform:scaleX(0.9178);">SDL-BK-1125-007</div>
<div class="t" style="left:273.20px;top:520.04px;font-size:14.20px;color:#000;transform:scaleX(0.9158);">2200</div>
<svg class="s" style="left:271px;top:523px;" width="6" height="6" viewBox="0 0 6 6" fill="none"><path d="M0 0 H5.5 L0 5.5 Z" fill="#1a8a3a"/></svg>
<div class="t" style="left:343.40px;top:520.04px;font-size:14.20px;color:#000;transform:scaleX(0.9158);">07/11/2025</div>
<div class="t" style="left:420.20px;top:520.04px;font-size:14.20px;color:#000;transform:scaleX(0.9295);">SDL BAYAR UTANG KE DJL</div>
<div class="t" style="left:810.67px;top:520.04px;font-size:14.20px;color:#000;transform:scaleX(0.9158);">-</div>
<div class="t" style="left:880.09px;top:520.04px;font-size:14.20px;color:#000;transform:scaleX(0.9158);">8.600.000,00</div>
<div class="t" style="left:1013.59px;top:520.04px;font-size:14.20px;color:#000;transform:scaleX(0.9158);">2.410.667,00</div>
<div class="t" style="left:1296.67px;top:520.04px;font-size:14.20px;color:#000;transform:scaleX(0.9158);">-</div>
<div class="b" style="left:88px;top:539px;width:68.5px;height:17px;background:#fce4d6;"></div>
<div class="b" style="left:53px;top:555px;width:35px;height:1px;background:#e4e4e4;"></div>
<div class="b" style="left:156.5px;top:555px;width:935.5px;height:1px;background:#e4e4e4;"></div>
<div class="b" style="left:1410px;top:555px;width:366px;height:1px;background:#e4e4e4;"></div>
<div class="t" style="left:36.04px;top:537.04px;font-size:14.20px;color:#000;transform:scaleX(0.9158);">87</div>
<div class="t" style="left:71.60px;top:537.04px;font-size:14.20px;color:#000;transform:scaleX(0.8821);">11</div>
<div class="t" style="left:90.90px;top:537.04px;font-size:14.20px;color:#000;transform:scaleX(0.8521);">November</div>
<div class="t" style="left:158.20px;top:537.04px;font-size:14.20px;color:#000;transform:scaleX(0.8993);">SDL-BM-1125-007</div>
<div class="t" style="left:273.20px;top:537.04px;font-size:14.20px;color:#000;transform:scaleX(0.9158);">4000.01</div>
<div class="t" style="left:343.40px;top:537.04px;font-size:14.20px;color:#000;transform:scaleX(0.9158);">07/11/2025</div>
<div class="t" style="left:420.20px;top:537.04px;font-size:14.20px;color:#000;transform:scaleX(0.9295);">PAK TRI EZA</div>
<div class="t" style="left:781.81px;top:537.04px;font-size:14.20px;color:#000;transform:scaleX(0.9158);">450.000</div>
<div class="t" style="left:937.67px;top:537.04px;font-size:14.20px;color:#000;transform:scaleX(0.9158);">-</div>
<div class="t" style="left:1013.59px;top:537.04px;font-size:14.20px;color:#000;transform:scaleX(0.9158);">2.860.667,00</div>
<div class="t" style="left:1249.23px;top:537.04px;font-size:14.20px;color:#000;transform:scaleX(0.9158);">450.000,00</div>
<div class="b" style="left:88px;top:556px;width:68.5px;height:17px;background:#fce4d6;"></div>
<div class="b" style="left:53px;top:572px;width:35px;height:1px;background:#e4e4e4;"></div>
<div class="b" style="left:156.5px;top:572px;width:935.5px;height:1px;background:#e4e4e4;"></div>
<div class="b" style="left:1410px;top:572px;width:366px;height:1px;background:#e4e4e4;"></div>
<div class="t" style="left:36.04px;top:554.04px;font-size:14.20px;color:#000;transform:scaleX(0.9158);">88</div>
<div class="t" style="left:71.60px;top:554.04px;font-size:14.20px;color:#000;transform:scaleX(0.8821);">11</div>
<div class="t" style="left:90.90px;top:554.04px;font-size:14.20px;color:#000;transform:scaleX(0.8521);">November</div>
<div class="t" style="left:158.20px;top:554.04px;font-size:14.20px;color:#000;transform:scaleX(0.8993);">SDL-BM-1125-008</div>
<div class="t" style="left:273.20px;top:554.04px;font-size:14.20px;color:#000;transform:scaleX(0.9158);">4000.01</div>
<div class="t" style="left:343.40px;top:554.04px;font-size:14.20px;color:#000;transform:scaleX(0.9158);">07/11/2025</div>
<div class="t" style="left:420.20px;top:554.04px;font-size:14.20px;color:#000;transform:scaleX(0.9295);">PAK MOKO</div>
<div class="t" style="left:781.81px;top:554.04px;font-size:14.20px;color:#000;transform:scaleX(0.9158);">900.000</div>
<div class="t" style="left:937.67px;top:554.04px;font-size:14.20px;color:#000;transform:scaleX(0.9158);">-</div>
<div class="t" style="left:1013.59px;top:554.04px;font-size:14.20px;color:#000;transform:scaleX(0.9158);">3.760.667,00</div>
<div class="t" style="left:1249.23px;top:554.04px;font-size:14.20px;color:#000;transform:scaleX(0.9158);">900.000,00</div>
<div class="b" style="left:88px;top:573px;width:68.5px;height:17px;background:#fce4d6;"></div>
<div class="b" style="left:53px;top:589px;width:35px;height:1px;background:#e4e4e4;"></div>
<div class="b" style="left:156.5px;top:589px;width:935.5px;height:1px;background:#e4e4e4;"></div>
<div class="b" style="left:1410px;top:589px;width:366px;height:1px;background:#e4e4e4;"></div>
<div class="t" style="left:36.04px;top:571.04px;font-size:14.20px;color:#000;transform:scaleX(0.9158);">89</div>
<div class="t" style="left:71.60px;top:571.04px;font-size:14.20px;color:#000;transform:scaleX(0.8821);">11</div>
<div class="t" style="left:90.90px;top:571.04px;font-size:14.20px;color:#000;transform:scaleX(0.8521);">November</div>
<div class="t" style="left:158.20px;top:571.04px;font-size:14.20px;color:#000;transform:scaleX(0.8993);">SDL-BM-1125-009</div>
<div class="t" style="left:273.20px;top:571.04px;font-size:14.20px;color:#000;transform:scaleX(0.9158);">4000.01</div>
<div class="t" style="left:343.40px;top:571.04px;font-size:14.20px;color:#000;transform:scaleX(0.9158);">07/11/2025</div>
<div class="t" style="left:420.20px;top:571.04px;font-size:14.20px;color:#000;transform:scaleX(0.9295);">PAK JUNA</div>
<div class="t" style="left:781.81px;top:571.04px;font-size:14.20px;color:#000;transform:scaleX(0.9158);">690.000</div>
<div class="t" style="left:937.67px;top:571.04px;font-size:14.20px;color:#000;transform:scaleX(0.9158);">-</div>
<div class="t" style="left:1013.59px;top:571.04px;font-size:14.20px;color:#000;transform:scaleX(0.9158);">4.450.667,00</div>
<div class="t" style="left:1249.23px;top:571.04px;font-size:14.20px;color:#000;transform:scaleX(0.9158);">690.000,00</div>
<div class="b" style="left:88px;top:590px;width:68.5px;height:17px;background:#fce4d6;"></div>
<div class="b" style="left:53px;top:606px;width:35px;height:1px;background:#e4e4e4;"></div>
<div class="b" style="left:156.5px;top:606px;width:935.5px;height:1px;background:#e4e4e4;"></div>
<div class="b" style="left:1410px;top:606px;width:366px;height:1px;background:#e4e4e4;"></div>
<div class="t" style="left:36.04px;top:588.04px;font-size:14.20px;color:#000;transform:scaleX(0.9158);">90</div>
<div class="t" style="left:71.60px;top:588.04px;font-size:14.20px;color:#000;transform:scaleX(0.8821);">11</div>
<div class="t" style="left:90.90px;top:588.04px;font-size:14.20px;color:#000;transform:scaleX(0.8521);">November</div>
<div class="t" style="left:158.20px;top:588.04px;font-size:14.20px;color:#000;transform:scaleX(0.9178);">SDL-BK-1125-008</div>
<div class="t" style="left:273.20px;top:588.04px;font-size:14.20px;color:#000;transform:scaleX(0.9158);">ayat silang</div>
<div class="t" style="left:343.40px;top:588.04px;font-size:14.20px;color:#000;transform:scaleX(0.9158);">08/11/2025</div>
<div class="t" style="left:420.20px;top:588.04px;font-size:14.20px;color:#000;transform:scaleX(0.9295);">TARIK TUNAI</div>
<div class="t" style="left:810.67px;top:588.04px;font-size:14.20px;color:#000;transform:scaleX(0.9158);">-</div>
<div class="t" style="left:880.09px;top:588.04px;font-size:14.20px;color:#000;transform:scaleX(0.9158);">2.000.000,00</div>
<div class="t" style="left:1013.59px;top:588.04px;font-size:14.20px;color:#000;transform:scaleX(0.9158);">2.450.667,00</div>
<div class="t" style="left:1296.67px;top:588.04px;font-size:14.20px;color:#000;transform:scaleX(0.9158);">-</div>
<div class="b" style="left:88px;top:607px;width:68.5px;height:17px;background:#fce4d6;"></div>
<div class="b" style="left:53px;top:623px;width:35px;height:1px;background:#e4e4e4;"></div>
<div class="b" style="left:156.5px;top:623px;width:935.5px;height:1px;background:#e4e4e4;"></div>
<div class="b" style="left:1410px;top:623px;width:366px;height:1px;background:#e4e4e4;"></div>
<div class="t" style="left:36.04px;top:605.04px;font-size:14.20px;color:#000;transform:scaleX(0.9158);">91</div>
<div class="t" style="left:71.60px;top:605.04px;font-size:14.20px;color:#000;transform:scaleX(0.8821);">11</div>
<div class="t" style="left:90.90px;top:605.04px;font-size:14.20px;color:#000;transform:scaleX(0.8521);">November</div>
<div class="t" style="left:158.20px;top:605.04px;font-size:14.20px;color:#000;transform:scaleX(0.8993);">SDL-BM-1125-010</div>
<div class="t" style="left:273.20px;top:605.04px;font-size:14.20px;color:#000;transform:scaleX(0.9158);">4000.01</div>
<div class="t" style="left:343.40px;top:605.04px;font-size:14.20px;color:#000;transform:scaleX(0.9158);">08/11/2025</div>
<div class="t" style="left:420.20px;top:605.04px;font-size:14.20px;color:#000;transform:scaleX(0.9295);">SENTOSA ABADI OKT 25</div>
<div class="t" style="left:770.97px;top:605.04px;font-size:14.20px;color:#000;transform:scaleX(0.9158);">2.150.000</div>
<div class="t" style="left:937.67px;top:605.04px;font-size:14.20px;color:#000;transform:scaleX(0.9158);">-</div>
<div class="t" style="left:1013.59px;top:605.04px;font-size:14.20px;color:#000;transform:scaleX(0.9158);">4.600.667,00</div>
<div class="t" style="left:1238.39px;top:605.04px;font-size:14.20px;color:#000;transform:scaleX(0.9158);">2.150.000,00</div>
<div class="b" style="left:88px;top:624px;width:68.5px;height:17px;background:#fce4d6;"></div>
<div class="b" style="left:53px;top:640px;width:35px;height:1px;background:#e4e4e4;"></div>
<div class="b" style="left:156.5px;top:640px;width:935.5px;height:1px;background:#e4e4e4;"></div>
<div class="b" style="left:1410px;top:640px;width:366px;height:1px;background:#e4e4e4;"></div>
<div class="t" style="left:36.04px;top:622.04px;font-size:14.20px;color:#000;transform:scaleX(0.9158);">92</div>
<div class="t" style="left:71.60px;top:622.04px;font-size:14.20px;color:#000;transform:scaleX(0.8821);">11</div>
<div class="t" style="left:90.90px;top:622.04px;font-size:14.20px;color:#000;transform:scaleX(0.8521);">November</div>
<div class="t" style="left:158.20px;top:622.04px;font-size:14.20px;color:#000;transform:scaleX(0.9178);">SDL-BK-1125-009</div>
<div class="t" style="left:273.20px;top:622.04px;font-size:14.20px;color:#000;transform:scaleX(0.9158);">1300</div>
<svg class="s" style="left:271px;top:625px;" width="6" height="6" viewBox="0 0 6 6" fill="none"><path d="M0 0 H5.5 L0 5.5 Z" fill="#1a8a3a"/></svg>
<div class="t" style="left:343.40px;top:622.04px;font-size:14.20px;color:#000;transform:scaleX(0.9158);">08/11/2025</div>
<div class="t" style="left:420.20px;top:622.04px;font-size:14.20px;color:#000;transform:scaleX(0.9295);">BAGIAN AUDIT</div>
<div class="t" style="left:810.67px;top:622.04px;font-size:14.20px;color:#000;transform:scaleX(0.9158);">-</div>
<div class="t" style="left:880.09px;top:622.04px;font-size:14.20px;color:#000;transform:scaleX(0.9158);">2.150.000,00</div>
<div class="t" style="left:1013.59px;top:622.04px;font-size:14.20px;color:#000;transform:scaleX(0.9158);">2.450.667,00</div>
<div class="t" style="left:1296.67px;top:622.04px;font-size:14.20px;color:#000;transform:scaleX(0.9158);">-</div>
<div class="b" style="left:88px;top:641px;width:68.5px;height:17px;background:#fce4d6;"></div>
<div class="b" style="left:53px;top:657px;width:35px;height:1px;background:#e4e4e4;"></div>
<div class="b" style="left:156.5px;top:657px;width:935.5px;height:1px;background:#e4e4e4;"></div>
<div class="b" style="left:1410px;top:657px;width:366px;height:1px;background:#e4e4e4;"></div>
<div class="t" style="left:36.04px;top:639.04px;font-size:14.20px;color:#000;transform:scaleX(0.9158);">93</div>
<div class="t" style="left:71.60px;top:639.04px;font-size:14.20px;color:#000;transform:scaleX(0.8821);">11</div>
<div class="t" style="left:90.90px;top:639.04px;font-size:14.20px;color:#000;transform:scaleX(0.8521);">November</div>
<div class="t" style="left:158.20px;top:639.04px;font-size:14.20px;color:#000;transform:scaleX(0.9075);">SDL-BM-1125-011</div>
<div class="t" style="left:273.20px;top:639.04px;font-size:14.20px;color:#000;transform:scaleX(0.9158);">4000.01</div>
<div class="t" style="left:343.40px;top:639.04px;font-size:14.20px;color:#000;transform:scaleX(0.9158);">10/11/2025</div>
<div class="t" style="left:420.20px;top:639.04px;font-size:14.20px;color:#000;transform:scaleX(0.9295);">PAK SURYA OKT 25</div>
<div class="t" style="left:763.73px;top:639.04px;font-size:14.20px;color:#000;transform:scaleX(0.9158);">10.300.000</div>
<div class="t" style="left:937.67px;top:639.04px;font-size:14.20px;color:#000;transform:scaleX(0.9158);">-</div>
<div class="t" style="left:1006.36px;top:639.04px;font-size:14.20px;color:#000;transform:scaleX(0.9158);">12.750.667,00</div>
<div class="t" style="left:1231.16px;top:639.04px;font-size:14.20px;color:#000;transform:scaleX(0.9158);">10.300.000,00</div>
<div class="b" style="left:88px;top:658px;width:68.5px;height:17px;background:#fce4d6;"></div>
<div class="b" style="left:53px;top:674px;width:35px;height:1px;background:#e4e4e4;"></div>
<div class="b" style="left:156.5px;top:674px;width:935.5px;height:1px;background:#e4e4e4;"></div>
<div class="b" style="left:1410px;top:674px;width:366px;height:1px;background:#e4e4e4;"></div>
<div class="t" style="left:36.04px;top:656.04px;font-size:14.20px;color:#000;transform:scaleX(0.9158);">94</div>
<div class="t" style="left:71.60px;top:656.04px;font-size:14.20px;color:#000;transform:scaleX(0.8821);">11</div>
<div class="t" style="left:90.90px;top:656.04px;font-size:14.20px;color:#000;transform:scaleX(0.8521);">November</div>
<div class="t" style="left:158.20px;top:656.04px;font-size:14.20px;color:#000;transform:scaleX(0.9178);">SDL-BK-1125-010</div>
<div class="t" style="left:273.20px;top:656.04px;font-size:14.20px;color:#000;transform:scaleX(0.9158);">ayat silang</div>
<div class="t" style="left:343.40px;top:656.04px;font-size:14.20px;color:#000;transform:scaleX(0.9158);">10/11/2025</div>
<div class="t" style="left:420.20px;top:656.04px;font-size:14.20px;color:#000;transform:scaleX(0.9295);">SDL BAYAR KASBON KE BPK</div>
<div class="t" style="left:810.67px;top:656.04px;font-size:14.20px;color:#000;transform:scaleX(0.9158);">-</div>
<div class="t" style="left:880.09px;top:656.04px;font-size:14.20px;color:#000;transform:scaleX(0.9158);">3.000.000,00</div>
<div class="t" style="left:1013.59px;top:656.04px;font-size:14.20px;color:#000;transform:scaleX(0.9158);">9.750.667,00</div>
<div class="t" style="left:1296.67px;top:656.04px;font-size:14.20px;color:#000;transform:scaleX(0.9158);">-</div>
<div class="b" style="left:88px;top:675px;width:68.5px;height:17px;background:#fce4d6;"></div>
<div class="b" style="left:53px;top:691px;width:35px;height:1px;background:#e4e4e4;"></div>
<div class="b" style="left:156.5px;top:691px;width:935.5px;height:1px;background:#e4e4e4;"></div>
<div class="b" style="left:1410px;top:691px;width:366px;height:1px;background:#e4e4e4;"></div>
<div class="t" style="left:36.04px;top:673.04px;font-size:14.20px;color:#000;transform:scaleX(0.9158);">95</div>
<div class="t" style="left:71.60px;top:673.04px;font-size:14.20px;color:#000;transform:scaleX(0.8821);">11</div>
<div class="t" style="left:90.90px;top:673.04px;font-size:14.20px;color:#000;transform:scaleX(0.8521);">November</div>
<div class="t" style="left:158.20px;top:673.04px;font-size:14.20px;color:#000;transform:scaleX(0.9263);">SDL-BK-1125-011</div>
<div class="t" style="left:273.20px;top:673.04px;font-size:14.20px;color:#000;transform:scaleX(0.9158);">1300</div>
<svg class="s" style="left:271px;top:676px;" width="6" height="6" viewBox="0 0 6 6" fill="none"><path d="M0 0 H5.5 L0 5.5 Z" fill="#1a8a3a"/></svg>
<div class="t" style="left:343.40px;top:673.04px;font-size:14.20px;color:#000;transform:scaleX(0.9158);">10/11/2025</div>
<div class="t" style="left:420.20px;top:673.04px;font-size:14.20px;color:#000;transform:scaleX(0.9295);">BAGIAN AUDIT</div>
<div class="t" style="left:810.67px;top:673.04px;font-size:14.20px;color:#000;transform:scaleX(0.9158);">-</div>
<div class="t" style="left:880.09px;top:673.04px;font-size:14.20px;color:#000;transform:scaleX(0.9158);">8.200.000,00</div>
<div class="t" style="left:1013.59px;top:673.04px;font-size:14.20px;color:#000;transform:scaleX(0.9158);">1.550.667,00</div>
<div class="t" style="left:1296.67px;top:673.04px;font-size:14.20px;color:#000;transform:scaleX(0.9158);">-</div>
<div class="b" style="left:88px;top:692px;width:68.5px;height:17px;background:#fce4d6;"></div>
<div class="b" style="left:53px;top:708px;width:35px;height:1px;background:#e4e4e4;"></div>
<div class="b" style="left:156.5px;top:708px;width:935.5px;height:1px;background:#e4e4e4;"></div>
<div class="b" style="left:1410px;top:708px;width:366px;height:1px;background:#e4e4e4;"></div>
<div class="t" style="left:36.04px;top:690.04px;font-size:14.20px;color:#000;transform:scaleX(0.9158);">96</div>
<div class="t" style="left:71.60px;top:690.04px;font-size:14.20px;color:#000;transform:scaleX(0.8821);">11</div>
<div class="t" style="left:90.90px;top:690.04px;font-size:14.20px;color:#000;transform:scaleX(0.8521);">November</div>
<div class="t" style="left:158.20px;top:690.04px;font-size:14.20px;color:#000;transform:scaleX(0.9178);">SDL-BK-1125-012</div>
<div class="t" style="left:273.20px;top:690.04px;font-size:14.20px;color:#000;transform:scaleX(0.9158);">6203.04</div>
<div class="t" style="left:343.40px;top:690.04px;font-size:14.20px;color:#000;transform:scaleX(0.9158);">10/11/2025</div>
<div class="t" style="left:420.20px;top:690.04px;font-size:14.20px;color:#000;transform:scaleX(0.9295);">KONSULTAN PAJAK</div>
<div class="t" style="left:810.67px;top:690.04px;font-size:14.20px;color:#000;transform:scaleX(0.9158);">-</div>
<div class="t" style="left:880.09px;top:690.04px;font-size:14.20px;color:#000;transform:scaleX(0.9158);">1.000.000,00</div>
<div class="t" style="left:1024.43px;top:690.04px;font-size:14.20px;color:#000;transform:scaleX(0.9158);">550.667,00</div>
<div class="t" style="left:1296.67px;top:690.04px;font-size:14.20px;color:#000;transform:scaleX(0.9158);">-</div>
<div class="b" style="left:88px;top:709px;width:68.5px;height:17px;background:#fce4d6;"></div>
<div class="b" style="left:53px;top:725px;width:35px;height:1px;background:#e4e4e4;"></div>
<div class="b" style="left:156.5px;top:725px;width:935.5px;height:1px;background:#e4e4e4;"></div>
<div class="b" style="left:1410px;top:725px;width:366px;height:1px;background:#e4e4e4;"></div>
<div class="t" style="left:36.04px;top:707.04px;font-size:14.20px;color:#000;transform:scaleX(0.9158);">97</div>
<div class="t" style="left:71.60px;top:707.04px;font-size:14.20px;color:#000;transform:scaleX(0.8821);">11</div>
<div class="t" style="left:90.90px;top:707.04px;font-size:14.20px;color:#000;transform:scaleX(0.8521);">November</div>
<div class="t" style="left:158.20px;top:707.04px;font-size:14.20px;color:#000;transform:scaleX(0.9178);">SDL-BK-1125-013</div>
<div class="t" style="left:273.20px;top:707.04px;font-size:14.20px;color:#000;transform:scaleX(0.9158);">6203.09</div>
<div class="t" style="left:343.40px;top:707.04px;font-size:14.20px;color:#000;transform:scaleX(0.9158);">10/11/2025</div>
<div class="t" style="left:420.20px;top:707.04px;font-size:14.20px;color:#000;transform:scaleX(0.9295);">PPH FINAL</div>
<div class="t" style="left:810.67px;top:707.04px;font-size:14.20px;color:#000;transform:scaleX(0.9158);">-</div>
<div class="t" style="left:890.93px;top:707.04px;font-size:14.20px;color:#000;transform:scaleX(0.9158);">108.365,00</div>
<div class="t" style="left:1024.43px;top:707.04px;font-size:14.20px;color:#000;transform:scaleX(0.9158);">442.302,00</div>
<div class="t" style="left:1296.67px;top:707.04px;font-size:14.20px;color:#000;transform:scaleX(0.9158);">-</div>
<div class="b" style="left:88px;top:726px;width:68.5px;height:17px;background:#fce4d6;"></div>
<div class="b" style="left:53px;top:742px;width:35px;height:1px;background:#e4e4e4;"></div>
<div class="b" style="left:156.5px;top:742px;width:935.5px;height:1px;background:#e4e4e4;"></div>
<div class="b" style="left:1410px;top:742px;width:366px;height:1px;background:#e4e4e4;"></div>
<div class="t" style="left:36.04px;top:724.04px;font-size:14.20px;color:#000;transform:scaleX(0.9158);">98</div>
<div class="t" style="left:71.60px;top:724.04px;font-size:14.20px;color:#000;transform:scaleX(0.8821);">11</div>
<div class="t" style="left:90.90px;top:724.04px;font-size:14.20px;color:#000;transform:scaleX(0.8521);">November</div>
<div class="t" style="left:158.20px;top:724.04px;font-size:14.20px;color:#000;transform:scaleX(0.9178);">SDL-BK-1125-014</div>
<div class="t" style="left:273.20px;top:724.04px;font-size:14.20px;color:#000;transform:scaleX(0.9158);">5100</div>
<svg class="s" style="left:271px;top:727px;" width="6" height="6" viewBox="0 0 6 6" fill="none"><path d="M0 0 H5.5 L0 5.5 Z" fill="#1a8a3a"/></svg>
<div class="t" style="left:343.40px;top:724.04px;font-size:14.20px;color:#000;transform:scaleX(0.9158);">10/11/2025</div>
<div class="t" style="left:420.20px;top:724.04px;font-size:14.20px;color:#000;transform:scaleX(0.9295);">PLOTERAN</div>
<div class="t" style="left:810.67px;top:724.04px;font-size:14.20px;color:#000;transform:scaleX(0.9158);">-</div>
<div class="t" style="left:898.17px;top:724.04px;font-size:14.20px;color:#000;transform:scaleX(0.9158);">25.000,00</div>
<div class="t" style="left:1024.43px;top:724.04px;font-size:14.20px;color:#000;transform:scaleX(0.9158);">417.302,00</div>
<div class="t" style="left:1296.67px;top:724.04px;font-size:14.20px;color:#000;transform:scaleX(0.9158);">-</div>
<div class="b" style="left:88px;top:743px;width:68.5px;height:17px;background:#fce4d6;"></div>
<div class="b" style="left:53px;top:759px;width:35px;height:1px;background:#e4e4e4;"></div>
<div class="b" style="left:156.5px;top:759px;width:935.5px;height:1px;background:#e4e4e4;"></div>
<div class="b" style="left:1410px;top:759px;width:366px;height:1px;background:#e4e4e4;"></div>
<div class="t" style="left:36.04px;top:741.04px;font-size:14.20px;color:#000;transform:scaleX(0.9158);">99</div>
<div class="t" style="left:71.60px;top:741.04px;font-size:14.20px;color:#000;transform:scaleX(0.8821);">11</div>
<div class="t" style="left:90.90px;top:741.04px;font-size:14.20px;color:#000;transform:scaleX(0.8521);">November</div>
<div class="t" style="left:158.20px;top:741.04px;font-size:14.20px;color:#000;transform:scaleX(0.8993);">SDL-BM-1125-012</div>
<div class="t" style="left:273.20px;top:741.04px;font-size:14.20px;color:#000;transform:scaleX(0.9158);">4000.01</div>
<div class="t" style="left:343.40px;top:741.04px;font-size:14.20px;color:#000;transform:scaleX(0.9158);">11/11/2025</div>
<div class="t" style="left:420.20px;top:741.04px;font-size:14.20px;color:#000;transform:scaleX(0.9295);">PAK TATA</div>
<div class="t" style="left:770.97px;top:741.04px;font-size:14.20px;color:#000;transform:scaleX(0.9158);">7.000.000</div>
<div class="t" style="left:937.67px;top:741.04px;font-size:14.20px;color:#000;transform:scaleX(0.9158);">-</div>
<div class="t" style="left:1013.59px;top:741.04px;font-size:14.20px;color:#000;transform:scaleX(0.9158);">7.417.302,00</div>
<div class="t" style="left:1238.39px;top:741.04px;font-size:14.20px;color:#000;transform:scaleX(0.9158);">7.000.000,00</div>
<div class="b" style="left:88px;top:760px;width:68.5px;height:17px;background:#fce4d6;"></div>
<div class="b" style="left:53px;top:776px;width:35px;height:1px;background:#e4e4e4;"></div>
<div class="b" style="left:156.5px;top:776px;width:935.5px;height:1px;background:#e4e4e4;"></div>
<div class="b" style="left:1410px;top:776px;width:366px;height:1px;background:#e4e4e4;"></div>
<div class="t" style="left:28.81px;top:758.04px;font-size:14.20px;color:#000;transform:scaleX(0.9158);">100</div>
<div class="t" style="left:71.60px;top:758.04px;font-size:14.20px;color:#000;transform:scaleX(0.8821);">11</div>
<div class="t" style="left:90.90px;top:758.04px;font-size:14.20px;color:#000;transform:scaleX(0.8521);">November</div>
<div class="t" style="left:158.20px;top:758.04px;font-size:14.20px;color:#000;transform:scaleX(0.8993);">SDL-BM-1125-013</div>
<div class="t" style="left:273.20px;top:758.04px;font-size:14.20px;color:#000;transform:scaleX(0.9158);">4000.01</div>
<div class="t" style="left:343.40px;top:758.04px;font-size:14.20px;color:#000;transform:scaleX(0.9158);">11/11/2025</div>
<div class="t" style="left:420.20px;top:758.04px;font-size:14.20px;color:#000;transform:scaleX(0.9295);">PAK ANDRI</div>
<div class="t" style="left:781.81px;top:758.04px;font-size:14.20px;color:#000;transform:scaleX(0.9158);">800.000</div>
<div class="t" style="left:937.67px;top:758.04px;font-size:14.20px;color:#000;transform:scaleX(0.9158);">-</div>
<div class="t" style="left:1013.59px;top:758.04px;font-size:14.20px;color:#000;transform:scaleX(0.9158);">8.217.302,00</div>
<div class="t" style="left:1249.23px;top:758.04px;font-size:14.20px;color:#000;transform:scaleX(0.9158);">800.000,00</div>
<div class="b" style="left:88px;top:777px;width:68.5px;height:17px;background:#fce4d6;"></div>
<div class="b" style="left:53px;top:793px;width:35px;height:1px;background:#e4e4e4;"></div>
<div class="b" style="left:156.5px;top:793px;width:935.5px;height:1px;background:#e4e4e4;"></div>
<div class="b" style="left:1410px;top:793px;width:366px;height:1px;background:#e4e4e4;"></div>
<div class="t" style="left:28.81px;top:775.04px;font-size:14.20px;color:#000;transform:scaleX(0.9158);">101</div>
<div class="t" style="left:71.60px;top:775.04px;font-size:14.20px;color:#000;transform:scaleX(0.8821);">11</div>
<div class="t" style="left:90.90px;top:775.04px;font-size:14.20px;color:#000;transform:scaleX(0.8521);">November</div>
<div class="t" style="left:158.20px;top:775.04px;font-size:14.20px;color:#000;transform:scaleX(0.8993);">SDL-BM-1125-014</div>
<div class="t" style="left:273.20px;top:775.04px;font-size:14.20px;color:#000;transform:scaleX(0.9158);">4000.01</div>
<div class="t" style="left:343.40px;top:775.04px;font-size:14.20px;color:#000;transform:scaleX(0.9158);">13/11/2025</div>
<div class="t" style="left:420.20px;top:775.04px;font-size:14.20px;color:#000;transform:scaleX(0.9295);">PAK JUNA</div>
<div class="t" style="left:781.81px;top:775.04px;font-size:14.20px;color:#000;transform:scaleX(0.9158);">690.000</div>
<div class="t" style="left:937.67px;top:775.04px;font-size:14.20px;color:#000;transform:scaleX(0.9158);">-</div>
<div class="t" style="left:1013.59px;top:775.04px;font-size:14.20px;color:#000;transform:scaleX(0.9158);">8.907.302,00</div>
<div class="t" style="left:1249.23px;top:775.04px;font-size:14.20px;color:#000;transform:scaleX(0.9158);">690.000,00</div>
<div class="b" style="left:88px;top:794px;width:68.5px;height:17px;background:#fce4d6;"></div>
<div class="b" style="left:53px;top:810px;width:35px;height:1px;background:#e4e4e4;"></div>
<div class="b" style="left:156.5px;top:810px;width:935.5px;height:1px;background:#e4e4e4;"></div>
<div class="b" style="left:1410px;top:810px;width:366px;height:1px;background:#e4e4e4;"></div>
<div class="t" style="left:28.81px;top:792.04px;font-size:14.20px;color:#000;transform:scaleX(0.9158);">102</div>
<div class="t" style="left:71.60px;top:792.04px;font-size:14.20px;color:#000;transform:scaleX(0.8821);">11</div>
<div class="t" style="left:90.90px;top:792.04px;font-size:14.20px;color:#000;transform:scaleX(0.8521);">November</div>
<div class="t" style="left:158.20px;top:792.04px;font-size:14.20px;color:#000;transform:scaleX(0.9178);">SDL-BK-1125-015</div>
<div class="t" style="left:273.20px;top:792.04px;font-size:14.20px;color:#000;transform:scaleX(0.9158);">5100</div>
<svg class="s" style="left:271px;top:795px;" width="6" height="6" viewBox="0 0 6 6" fill="none"><path d="M0 0 H5.5 L0 5.5 Z" fill="#1a8a3a"/></svg>
<div class="t" style="left:343.40px;top:792.04px;font-size:14.20px;color:#000;transform:scaleX(0.9158);">17/11/2025</div>
<div class="t" style="left:420.20px;top:792.04px;font-size:14.20px;color:#000;transform:scaleX(0.9295);">PLAT BESI 2MM, 1LBR</div>
<div class="t" style="left:810.67px;top:792.04px;font-size:14.20px;color:#000;transform:scaleX(0.9158);">-</div>
<div class="t" style="left:890.93px;top:792.04px;font-size:14.20px;color:#000;transform:scaleX(0.9158);">535.000,00</div>
<div class="t" style="left:1013.59px;top:792.04px;font-size:14.20px;color:#000;transform:scaleX(0.9158);">8.372.302,00</div>
<div class="t" style="left:1296.67px;top:792.04px;font-size:14.20px;color:#000;transform:scaleX(0.9158);">-</div>
<div class="b" style="left:88px;top:811px;width:68.5px;height:17px;background:#fce4d6;"></div>
<div class="b" style="left:53px;top:827px;width:35px;height:1px;background:#e4e4e4;"></div>
<div class="b" style="left:156.5px;top:827px;width:935.5px;height:1px;background:#e4e4e4;"></div>
<div class="b" style="left:1410px;top:827px;width:366px;height:1px;background:#e4e4e4;"></div>
<div class="t" style="left:28.81px;top:809.04px;font-size:14.20px;color:#000;transform:scaleX(0.9158);">103</div>
<div class="t" style="left:71.60px;top:809.04px;font-size:14.20px;color:#000;transform:scaleX(0.8821);">11</div>
<div class="t" style="left:90.90px;top:809.04px;font-size:14.20px;color:#000;transform:scaleX(0.8521);">November</div>
<div class="t" style="left:158.20px;top:809.04px;font-size:14.20px;color:#000;transform:scaleX(0.9178);">SDL-BK-1125-016</div>
<div class="t" style="left:273.20px;top:809.04px;font-size:14.20px;color:#000;transform:scaleX(0.9158);">5100</div>
<svg class="s" style="left:271px;top:812px;" width="6" height="6" viewBox="0 0 6 6" fill="none"><path d="M0 0 H5.5 L0 5.5 Z" fill="#1a8a3a"/></svg>
<div class="t" style="left:343.40px;top:809.04px;font-size:14.20px;color:#000;transform:scaleX(0.9158);">17/11/2025</div>
<div class="t" style="left:420.20px;top:809.04px;font-size:14.20px;color:#000;transform:scaleX(0.9295);">AKRILIK 3MM,1LBR</div>
<div class="t" style="left:810.67px;top:809.04px;font-size:14.20px;color:#000;transform:scaleX(0.9158);">-</div>
<div class="t" style="left:890.93px;top:809.04px;font-size:14.20px;color:#000;transform:scaleX(0.9158);">600.000,00</div>
<div class="t" style="left:1013.59px;top:809.04px;font-size:14.20px;color:#000;transform:scaleX(0.9158);">7.772.302,00</div>
<div class="t" style="left:1296.67px;top:809.04px;font-size:14.20px;color:#000;transform:scaleX(0.9158);">-</div>
<div class="b" style="left:88px;top:828px;width:68.5px;height:17px;background:#fce4d6;"></div>
<div class="b" style="left:53px;top:844px;width:35px;height:1px;background:#e4e4e4;"></div>
<div class="b" style="left:156.5px;top:844px;width:935.5px;height:1px;background:#e4e4e4;"></div>
<div class="b" style="left:1410px;top:844px;width:366px;height:1px;background:#e4e4e4;"></div>
<div class="t" style="left:28.81px;top:826.04px;font-size:14.20px;color:#000;transform:scaleX(0.9158);">104</div>
<div class="t" style="left:71.60px;top:826.04px;font-size:14.20px;color:#000;transform:scaleX(0.8821);">11</div>
<div class="t" style="left:90.90px;top:826.04px;font-size:14.20px;color:#000;transform:scaleX(0.8521);">November</div>
<div class="t" style="left:158.20px;top:826.04px;font-size:14.20px;color:#000;transform:scaleX(0.8993);">SDL-BM-1125-015</div>
<div class="t" style="left:273.20px;top:826.04px;font-size:14.20px;color:#000;transform:scaleX(0.9158);">4000.01</div>
<div class="t" style="left:343.40px;top:826.04px;font-size:14.20px;color:#000;transform:scaleX(0.9158);">17/11/2025</div>
<div class="t" style="left:420.20px;top:826.04px;font-size:14.20px;color:#000;transform:scaleX(0.9295);">PAK JUNA</div>
<div class="t" style="left:781.81px;top:826.04px;font-size:14.20px;color:#000;transform:scaleX(0.9158);">920.000</div>
<div class="t" style="left:937.67px;top:826.04px;font-size:14.20px;color:#000;transform:scaleX(0.9158);">-</div>
<div class="t" style="left:1013.59px;top:826.04px;font-size:14.20px;color:#000;transform:scaleX(0.9158);">8.692.302,00</div>
<div class="t" style="left:1249.23px;top:826.04px;font-size:14.20px;color:#000;transform:scaleX(0.9158);">920.000,00</div>
<div class="b" style="left:88px;top:845px;width:68.5px;height:17px;background:#fce4d6;"></div>
<div class="b" style="left:53px;top:861px;width:35px;height:1px;background:#e4e4e4;"></div>
<div class="b" style="left:156.5px;top:861px;width:935.5px;height:1px;background:#e4e4e4;"></div>
<div class="b" style="left:1410px;top:861px;width:366px;height:1px;background:#e4e4e4;"></div>
<div class="t" style="left:28.81px;top:843.04px;font-size:14.20px;color:#000;transform:scaleX(0.9158);">105</div>
<div class="t" style="left:71.60px;top:843.04px;font-size:14.20px;color:#000;transform:scaleX(0.8821);">11</div>
<div class="t" style="left:90.90px;top:843.04px;font-size:14.20px;color:#000;transform:scaleX(0.8521);">November</div>
<div class="t" style="left:158.20px;top:843.04px;font-size:14.20px;color:#000;transform:scaleX(0.9178);">SDL-BK-1125-017</div>
<div class="t" style="left:273.20px;top:843.04px;font-size:14.20px;color:#000;transform:scaleX(0.9158);">5100</div>
<svg class="s" style="left:271px;top:846px;" width="6" height="6" viewBox="0 0 6 6" fill="none"><path d="M0 0 H5.5 L0 5.5 Z" fill="#1a8a3a"/></svg>
<div class="t" style="left:343.40px;top:843.04px;font-size:14.20px;color:#000;transform:scaleX(0.9158);">18/11/2025</div>
<div class="t" style="left:420.20px;top:843.04px;font-size:14.20px;color:#000;transform:scaleX(0.9295);">PLAT BESI 8MM, UK 71 x 71 CM</div>
<div class="t" style="left:810.67px;top:843.04px;font-size:14.20px;color:#000;transform:scaleX(0.9158);">-</div>
<div class="t" style="left:890.93px;top:843.04px;font-size:14.20px;color:#000;transform:scaleX(0.9158);">474.000,00</div>
<div class="t" style="left:1013.59px;top:843.04px;font-size:14.20px;color:#000;transform:scaleX(0.9158);">8.218.302,00</div>
<div class="t" style="left:1296.67px;top:843.04px;font-size:14.20px;color:#000;transform:scaleX(0.9158);">-</div>
<div class="b" style="left:88px;top:862px;width:68.5px;height:17px;background:#fce4d6;"></div>
<div class="b" style="left:53px;top:878px;width:35px;height:1px;background:#e4e4e4;"></div>
<div class="b" style="left:156.5px;top:878px;width:935.5px;height:1px;background:#e4e4e4;"></div>
<div class="b" style="left:1410px;top:878px;width:366px;height:1px;background:#e4e4e4;"></div>
<div class="t" style="left:28.81px;top:860.04px;font-size:14.20px;color:#000;transform:scaleX(0.9158);">106</div>
<div class="t" style="left:71.60px;top:860.04px;font-size:14.20px;color:#000;transform:scaleX(0.8821);">11</div>
<div class="t" style="left:90.90px;top:860.04px;font-size:14.20px;color:#000;transform:scaleX(0.8521);">November</div>
<div class="t" style="left:158.20px;top:860.04px;font-size:14.20px;color:#000;transform:scaleX(0.9178);">SDL-BK-1125-018</div>
<div class="t" style="left:273.20px;top:860.04px;font-size:14.20px;color:#000;transform:scaleX(0.9158);">5100</div>
<svg class="s" style="left:271px;top:863px;" width="6" height="6" viewBox="0 0 6 6" fill="none"><path d="M0 0 H5.5 L0 5.5 Z" fill="#1a8a3a"/></svg>
<div class="t" style="left:343.40px;top:860.04px;font-size:14.20px;color:#000;transform:scaleX(0.9158);">19/11/2025</div>
<div class="t" style="left:420.20px;top:860.04px;font-size:14.20px;color:#000;transform:scaleX(0.9295);">PLAT BESI 8MM, UK 71 x 71 CM</div>
<div class="t" style="left:810.67px;top:860.04px;font-size:14.20px;color:#000;transform:scaleX(0.9158);">-</div>
<div class="t" style="left:890.93px;top:860.04px;font-size:14.20px;color:#000;transform:scaleX(0.9158);">474.000,00</div>
<div class="t" style="left:1013.59px;top:860.04px;font-size:14.20px;color:#000;transform:scaleX(0.9158);">7.744.302,00</div>
<div class="t" style="left:1296.67px;top:860.04px;font-size:14.20px;color:#000;transform:scaleX(0.9158);">-</div>
<div class="b" style="left:88px;top:879px;width:68.5px;height:17px;background:#fce4d6;"></div>
<div class="b" style="left:53px;top:895px;width:35px;height:1px;background:#e4e4e4;"></div>
<div class="b" style="left:156.5px;top:895px;width:935.5px;height:1px;background:#e4e4e4;"></div>
<div class="b" style="left:1410px;top:895px;width:366px;height:1px;background:#e4e4e4;"></div>
<div class="t" style="left:28.81px;top:877.04px;font-size:14.20px;color:#000;transform:scaleX(0.9158);">107</div>
<div class="t" style="left:71.60px;top:877.04px;font-size:14.20px;color:#000;transform:scaleX(0.8821);">11</div>
<div class="t" style="left:90.90px;top:877.04px;font-size:14.20px;color:#000;transform:scaleX(0.8521);">November</div>
<div class="t" style="left:158.20px;top:877.04px;font-size:14.20px;color:#000;transform:scaleX(0.8993);">SDL-BM-1125-016</div>
<div class="t" style="left:273.20px;top:877.04px;font-size:14.20px;color:#000;transform:scaleX(0.9158);">4000.01</div>
<div class="t" style="left:343.40px;top:877.04px;font-size:14.20px;color:#000;transform:scaleX(0.9158);">19/11/2025</div>
<div class="t" style="left:420.20px;top:877.04px;font-size:14.20px;color:#000;transform:scaleX(0.9295);">PAK NARWAN</div>
<div class="t" style="left:770.97px;top:877.04px;font-size:14.20px;color:#000;transform:scaleX(0.9158);">2.600.000</div>
<div class="t" style="left:937.67px;top:877.04px;font-size:14.20px;color:#000;transform:scaleX(0.9158);">-</div>
<div class="t" style="left:1006.36px;top:877.04px;font-size:14.20px;color:#000;transform:scaleX(0.9158);">10.344.302,00</div>
<div class="t" style="left:1238.39px;top:877.04px;font-size:14.20px;color:#000;transform:scaleX(0.9158);">2.600.000,00</div>
<div class="b" style="left:88px;top:896px;width:68.5px;height:17px;background:#fce4d6;"></div>
<div class="b" style="left:53px;top:912px;width:35px;height:1px;background:#e4e4e4;"></div>
<div class="b" style="left:156.5px;top:912px;width:935.5px;height:1px;background:#e4e4e4;"></div>
<div class="b" style="left:1410px;top:912px;width:366px;height:1px;background:#e4e4e4;"></div>
<div class="t" style="left:28.81px;top:894.04px;font-size:14.20px;color:#000;transform:scaleX(0.9158);">108</div>
<div class="t" style="left:71.60px;top:894.04px;font-size:14.20px;color:#000;transform:scaleX(0.8821);">11</div>
<div class="t" style="left:90.90px;top:894.04px;font-size:14.20px;color:#000;transform:scaleX(0.8521);">November</div>
<div class="t" style="left:158.20px;top:894.04px;font-size:14.20px;color:#000;transform:scaleX(0.8993);">SDL-BM-1125-017</div>
<div class="t" style="left:273.20px;top:894.04px;font-size:14.20px;color:#000;transform:scaleX(0.9158);">4000.01</div>
<div class="t" style="left:343.40px;top:894.04px;font-size:14.20px;color:#000;transform:scaleX(0.9158);">20/11/2025</div>
<div class="t" style="left:420.20px;top:894.04px;font-size:14.20px;color:#000;transform:scaleX(0.9295);">PAK SURYA</div>
<div class="t" style="left:770.97px;top:894.04px;font-size:14.20px;color:#000;transform:scaleX(0.9158);">5.400.000</div>
<div class="t" style="left:937.67px;top:894.04px;font-size:14.20px;color:#000;transform:scaleX(0.9158);">-</div>
<div class="t" style="left:1006.36px;top:894.04px;font-size:14.20px;color:#000;transform:scaleX(0.9158);">15.744.302,00</div>
<div class="t" style="left:1238.39px;top:894.04px;font-size:14.20px;color:#000;transform:scaleX(0.9158);">5.400.000,00</div>
<div class="b" style="left:88px;top:913px;width:68.5px;height:17px;background:#fce4d6;"></div>
<div class="b" style="left:53px;top:929px;width:35px;height:1px;background:#e4e4e4;"></div>
<div class="b" style="left:156.5px;top:929px;width:935.5px;height:1px;background:#e4e4e4;"></div>
<div class="b" style="left:1410px;top:929px;width:366px;height:1px;background:#e4e4e4;"></div>
<div class="t" style="left:28.81px;top:911.04px;font-size:14.20px;color:#000;transform:scaleX(0.9158);">109</div>
<div class="t" style="left:71.60px;top:911.04px;font-size:14.20px;color:#000;transform:scaleX(0.8821);">11</div>
<div class="t" style="left:90.90px;top:911.04px;font-size:14.20px;color:#000;transform:scaleX(0.8521);">November</div>
<div class="t" style="left:158.20px;top:911.04px;font-size:14.20px;color:#000;transform:scaleX(0.9178);">SDL-BK-1125-019</div>
<div class="t" style="left:273.20px;top:911.04px;font-size:14.20px;color:#000;transform:scaleX(0.9158);">1300</div>
<svg class="s" style="left:271px;top:914px;" width="6" height="6" viewBox="0 0 6 6" fill="none"><path d="M0 0 H5.5 L0 5.5 Z" fill="#1a8a3a"/></svg>
<div class="t" style="left:343.40px;top:911.04px;font-size:14.20px;color:#000;transform:scaleX(0.9158);">20/11/2025</div>
<div class="t" style="left:420.20px;top:911.04px;font-size:14.20px;color:#000;transform:scaleX(0.9295);">BAGIAN AUDIT</div>
<div class="t" style="left:810.67px;top:911.04px;font-size:14.20px;color:#000;transform:scaleX(0.9158);">-</div>
<div class="t" style="left:880.09px;top:911.04px;font-size:14.20px;color:#000;transform:scaleX(0.9158);">1.650.000,00</div>
<div class="t" style="left:1006.36px;top:911.04px;font-size:14.20px;color:#000;transform:scaleX(0.9158);">14.094.302,00</div>
<div class="t" style="left:1296.67px;top:911.04px;font-size:14.20px;color:#000;transform:scaleX(0.9158);">-</div>
<div class="b" style="left:88px;top:930px;width:68.5px;height:17px;background:#fce4d6;"></div>
<div class="b" style="left:53px;top:946px;width:35px;height:1px;background:#e4e4e4;"></div>
<div class="b" style="left:156.5px;top:946px;width:935.5px;height:1px;background:#e4e4e4;"></div>
<div class="b" style="left:1410px;top:946px;width:366px;height:1px;background:#e4e4e4;"></div>
<div class="t" style="left:29.77px;top:928.04px;font-size:14.20px;color:#000;transform:scaleX(0.9158);">110</div>
<div class="t" style="left:71.60px;top:928.04px;font-size:14.20px;color:#000;transform:scaleX(0.8821);">11</div>
<div class="t" style="left:90.90px;top:928.04px;font-size:14.20px;color:#000;transform:scaleX(0.8521);">November</div>
<div class="t" style="left:158.20px;top:928.04px;font-size:14.20px;color:#000;transform:scaleX(0.9178);">SDL-BK-1125-020</div>
<div class="t" style="left:273.20px;top:928.04px;font-size:14.20px;color:#000;transform:scaleX(0.9158);">5100</div>
<svg class="s" style="left:271px;top:931px;" width="6" height="6" viewBox="0 0 6 6" fill="none"><path d="M0 0 H5.5 L0 5.5 Z" fill="#1a8a3a"/></svg>
<div class="t" style="left:343.40px;top:928.04px;font-size:14.20px;color:#000;transform:scaleX(0.9158);">21/11/2025</div>
<div class="t" style="left:420.20px;top:928.04px;font-size:14.20px;color:#000;transform:scaleX(0.9295);">GALVANIL 1MM, 3LBR</div>
<div class="t" style="left:810.67px;top:928.04px;font-size:14.20px;color:#000;transform:scaleX(0.9158);">-</div>
<div class="t" style="left:880.09px;top:928.04px;font-size:14.20px;color:#000;transform:scaleX(0.9158);">1.095.000,00</div>
<div class="t" style="left:1006.36px;top:928.04px;font-size:14.20px;color:#000;transform:scaleX(0.9158);">12.999.302,00</div>
<div class="t" style="left:1296.67px;top:928.04px;font-size:14.20px;color:#000;transform:scaleX(0.9158);">-</div>
<div class="b" style="left:88px;top:947px;width:68.5px;height:17px;background:#fce4d6;"></div>
<div class="b" style="left:53px;top:963px;width:35px;height:1px;background:#e4e4e4;"></div>
<div class="b" style="left:156.5px;top:963px;width:935.5px;height:1px;background:#e4e4e4;"></div>
<div class="b" style="left:1410px;top:963px;width:366px;height:1px;background:#e4e4e4;"></div>
<div class="t" style="left:30.74px;top:945.04px;font-size:14.20px;color:#000;transform:scaleX(0.9158);">111</div>
<div class="t" style="left:71.60px;top:945.04px;font-size:14.20px;color:#000;transform:scaleX(0.8821);">11</div>
<div class="t" style="left:90.90px;top:945.04px;font-size:14.20px;color:#000;transform:scaleX(0.8521);">November</div>
<div class="t" style="left:158.20px;top:945.04px;font-size:14.20px;color:#000;transform:scaleX(0.9178);">SDL-BK-1125-021</div>
<div class="t" style="left:273.20px;top:945.04px;font-size:14.20px;color:#000;transform:scaleX(0.9158);">ayat silang</div>
<div class="t" style="left:343.40px;top:945.04px;font-size:14.20px;color:#000;transform:scaleX(0.9158);">22/11/2025</div>
<div class="t" style="left:420.20px;top:945.04px;font-size:14.20px;color:#000;transform:scaleX(0.9295);">TARIK TUNAI</div>
<div class="t" style="left:810.67px;top:945.04px;font-size:14.20px;color:#000;transform:scaleX(0.9158);">-</div>
<div class="t" style="left:880.09px;top:945.04px;font-size:14.20px;color:#000;transform:scaleX(0.9158);">2.000.000,00</div>
<div class="t" style="left:1006.36px;top:945.04px;font-size:14.20px;color:#000;transform:scaleX(0.9158);">10.999.302,00</div>
<div class="t" style="left:1296.67px;top:945.04px;font-size:14.20px;color:#000;transform:scaleX(0.9158);">-</div>
<div class="b" style="left:88px;top:964px;width:68.5px;height:17px;background:#fce4d6;"></div>
<div class="b" style="left:53px;top:980px;width:35px;height:1px;background:#e4e4e4;"></div>
<div class="b" style="left:156.5px;top:980px;width:935.5px;height:1px;background:#e4e4e4;"></div>
<div class="b" style="left:1410px;top:980px;width:366px;height:1px;background:#e4e4e4;"></div>
<div class="t" style="left:29.77px;top:962.04px;font-size:14.20px;color:#000;transform:scaleX(0.9158);">112</div>
<div class="t" style="left:71.60px;top:962.04px;font-size:14.20px;color:#000;transform:scaleX(0.8821);">11</div>
<div class="t" style="left:90.90px;top:962.04px;font-size:14.20px;color:#000;transform:scaleX(0.8521);">November</div>
<div class="t" style="left:158.20px;top:962.04px;font-size:14.20px;color:#000;transform:scaleX(0.8993);">SDL-BM-1125-018</div>
<div class="t" style="left:273.20px;top:962.04px;font-size:14.20px;color:#000;transform:scaleX(0.9158);">4000.01</div>
<div class="t" style="left:343.40px;top:962.04px;font-size:14.20px;color:#000;transform:scaleX(0.9158);">24/11/2025</div>
<div class="t" style="left:420.20px;top:962.04px;font-size:14.20px;color:#000;transform:scaleX(0.9295);">PAK TATA</div>
<div class="t" style="left:770.97px;top:962.04px;font-size:14.20px;color:#000;transform:scaleX(0.9158);">7.000.000</div>
<div class="t" style="left:937.67px;top:962.04px;font-size:14.20px;color:#000;transform:scaleX(0.9158);">-</div>
<div class="t" style="left:1006.36px;top:962.04px;font-size:14.20px;color:#000;transform:scaleX(0.9158);">17.999.302,00</div>
<div class="t" style="left:1238.39px;top:962.04px;font-size:14.20px;color:#000;transform:scaleX(0.9158);">7.000.000,00</div>
<div class="b" style="left:156px;top:318px;width:1px;height:660px;background:#e4e4e4;"></div>
<div class="b" style="left:270px;top:318px;width:1px;height:660px;background:#e4e4e4;"></div>
<div class="b" style="left:340px;top:318px;width:1px;height:660px;background:#e4e4e4;"></div>
<div class="b" style="left:418px;top:318px;width:1px;height:660px;background:#e4e4e4;"></div>
<div class="b" style="left:702px;top:318px;width:1px;height:660px;background:#e4e4e4;"></div>
<div class="b" style="left:835px;top:318px;width:1px;height:660px;background:#e4e4e4;"></div>
<div class="b" style="left:962px;top:318px;width:1px;height:660px;background:#e4e4e4;"></div>
<div class="b" style="left:1091px;top:318px;width:1px;height:660px;background:#e4e4e4;"></div></div>
<div class="b" style="left:0px;top:978px;width:1920px;height:32px;background:#0f1114;"></div>
<svg class="s" style="left:27px;top:988px;" width="8" height="12" viewBox="0 0 8 12" fill="none"><path d="M6 1 L1.5 6 L6 11" stroke="#8a8a8a" stroke-width="1.2"/></svg>
<svg class="s" style="left:60px;top:988px;" width="8" height="12" viewBox="0 0 8 12" fill="none"><path d="M2 1 L6.5 6 L2 11" stroke="#8a8a8a" stroke-width="1.2"/></svg>
<div class="t u" style="left:125.00px;top:984.65px;font-size:13.20px;color:#eaeaea;transform:scaleX(1.0939);">Note</div>
<div class="b" style="left:169px;top:984px;width:1px;height:21px;background:#4a4a4a;"></div>
<div class="b" style="left:224px;top:984px;width:1px;height:21px;background:#4a4a4a;"></div>
<div class="b" style="left:291px;top:984px;width:1px;height:21px;background:#4a4a4a;"></div>
<div class="b" style="left:394px;top:984px;width:1px;height:21px;background:#4a4a4a;"></div>
<div class="b" style="left:448px;top:984px;width:1px;height:21px;background:#4a4a4a;"></div>
<div class="b" style="left:574px;top:984px;width:1px;height:21px;background:#4a4a4a;"></div>
<div class="b" style="left:654px;top:984px;width:1px;height:21px;background:#4a4a4a;"></div>
<div class="b" style="left:739px;top:984px;width:1px;height:21px;background:#4a4a4a;"></div>
<div class="b" style="left:830.5px;top:984px;width:1px;height:21px;background:#4a4a4a;"></div>
<div class="b" style="left:172.5px;top:982px;width:46.5px;height:23.5px;background:#f6b81e;border-radius:4px;"></div>
<div class="t u" style="left:182.50px;top:984.65px;font-size:13.20px;color:#2a1f00;transform:scaleX(0.9611);">Final</div>
<div class="b" style="left:228px;top:982px;width:58px;height:23.5px;background:#548c32;border-radius:4px;"></div>
<div class="t u" style="left:236.00px;top:984.65px;font-size:13.20px;color:#e4f2da;transform:scaleX(0.9584);">PPh 21</div>
<div class="b" style="left:295px;top:982px;width:94px;height:23.5px;background:#70b84a;border-radius:4px;"></div>
<div class="t u" style="left:304.00px;top:984.65px;font-size:13.20px;color:#10240a;transform:scaleX(1.0122);">BP21-Kartap</div>
<div class="t u" style="left:406.75px;top:984.65px;font-size:13.20px;color:#eaeaea;transform:scaleX(0.9203);">GAJI</div>
<div class="b" style="left:451px;top:975px;width:118.5px;height:30.5px;background:#ffffff;border-radius:0 0 6px 6px;"></div>
<div class="t u" style="left:460.50px;top:981.65px;font-size:13.20px;color:#1b1b1b;transform:scaleX(1.0563);">Rekening Koran</div>
<div class="b" style="left:460px;top:1001px;width:101px;height:2px;background:#1f7a4d;border-radius:1px;"></div>
<div class="t u" style="left:587.50px;top:984.65px;font-size:13.20px;color:#eaeaea;transform:scaleX(0.9541);">Kas Kecil</div>
<div class="t u" style="left:668.00px;top:984.65px;font-size:13.20px;color:#eaeaea;transform:scaleX(0.9641);">Rekap RK</div>
<div class="t u" style="left:753.00px;top:984.65px;font-size:13.20px;color:#eaeaea;transform:scaleX(1.0133);">Penjualan</div>
<svg class="s" style="left:871px;top:987px;" width="14" height="14" viewBox="0 0 14 14" fill="none"><path d="M7.5 0.5 V13.5 M0.5 7.5 H13.5" stroke="#e8e8e8" stroke-width="1"/></svg>
<div class="b" style="left:1153px;top:988px;width:3px;height:2.5px;background:#ccc;border-radius:1px;"></div>
<div class="b" style="left:1153px;top:993px;width:3px;height:2.5px;background:#ccc;border-radius:1px;"></div>
<div class="b" style="left:1153px;top:998px;width:3px;height:2.5px;background:#ccc;border-radius:1px;"></div>
<svg class="s" style="left:1175px;top:988px;" width="9" height="12" viewBox="0 0 9 12" fill="none"><path d="M8 1 V11 L1 6 Z" fill="#9c9c9c"/></svg>
<div class="b" style="left:1188px;top:989px;width:646px;height:9.5px;background:#9d9d9d;border-radius:5px;"></div>
<svg class="s" style="left:1886px;top:988px;" width="9" height="12" viewBox="0 0 9 12" fill="none"><path d="M1 1 V11 L8 6 Z" fill="#9c9c9c"/></svg>
<div class="b" style="left:0px;top:1010px;width:1920px;height:1px;background:#3a3a3a;"></div>
<div class="b" style="left:0px;top:1011px;width:1920px;height:21px;background:#151314;"></div>
<div class="t u" style="left:11.00px;top:1012.16px;font-size:12.40px;color:#e6e6e6;transform:scaleX(0.8648);">Ready</div>
<div class="t u" style="left:59.00px;top:1011.66px;font-size:12.40px;color:#e6e6e6;transform:scaleX(0.9352);">54 of 178 records found</div>
<svg class="s" style="left:200px;top:1013px;" width="16" height="16" viewBox="0 0 16 16" fill="none"><circle cx="7" cy="2.5" r="1.8" stroke="#ddd" stroke-width="1.1"/><path d="M1 5.5 L7 6.5 L13 5.5 M7 6.5 V9 L3 15 M7 9 L9 11" stroke="#ddd" stroke-width="1.2"/><path d="M10 10 L15 15 M15 10 L10 15" stroke="#ddd" stroke-width="1.2"/></svg>
<div class="t u" style="left:219.00px;top:1011.66px;font-size:12.40px;color:#f0f0f0;font-weight:bold;transform:scaleX(0.8504);">Accessibility: Investigate</div>
<div class="b" style="left:1620.5px;top:1011px;width:39px;height:20px;background:#262626;"></div>
<svg class="s" style="left:1632px;top:1014px;" width="15" height="14" viewBox="0 0 15 14" fill="none"><rect x="0.5" y="0.5" width="13" height="12.5" stroke="#e0e0e0" stroke-width="1.1"/><path d="M0.5 4.7 H13.5 M0.5 8.8 H13.5 M4.8 0.5 V13 M9.2 0.5 V13" stroke="#e0e0e0" stroke-width="1.1"/></svg>
<svg class="s" style="left:1672px;top:1014px;" width="15" height="14" viewBox="0 0 15 14" fill="none"><rect x="0.5" y="0.5" width="13.5" height="12.5" stroke="#e0e0e0" stroke-width="1.1"/><rect x="3" y="3" width="8.5" height="7.5" stroke="#e0e0e0" stroke-width="1"/><path d="M5 5.5 H9.5 M5 8 H9.5" stroke="#e0e0e0" stroke-width="1"/></svg>
<svg class="s" style="left:1712px;top:1014px;" width="15" height="14" viewBox="0 0 15 14" fill="none"><path d="M0.5 13 V0.5 H14 V13 Z M7 0.5 V7 H0.5 M7 7 H14" stroke="#e0e0e0" stroke-width="1.1"/></svg>
<div class="b" style="left:1745px;top:1020px;width:9px;height:1.2px;background:#ddd;"></div>
<div class="b" style="left:1759px;top:1020.5px;width:99px;height:1px;background:#bdbdbd;"></div>
<div class="b" style="left:1806px;top:1016px;width:5px;height:11px;background:#cfcfcf;border-radius:1px;"></div>
<svg class="s" style="left:1862px;top:1015px;" width="12" height="12" viewBox="0 0 12 12" fill="none"><path d="M5.5 0.5 V11.5 M0.5 5.5 H11.5" stroke="#e8e8e8" stroke-width="1"/></svg>
<div class="t u" style="left:1884.50px;top:1011.66px;font-size:12.40px;color:#f0f0f0;transform:scaleX(0.8461);">98%</div>
<div class="b" style="left:0px;top:1032px;width:1920px;height:48px;background:#1c2628;"></div>
<div class="b" style="left:0px;top:1032px;width:1920px;height:1px;background:#2a3133;"></div>
<svg class="s" style="left:16px;top:1046px;" width="34" height="24" viewBox="0 0 34 24" fill="none"><path d="M6 21 C1 21 1 14 6 14 C6 9 14 8 16 12 C19 7 28 9 27 15 C32 15 32 21 27 21 Z" fill="#c8dcf0"/><path d="M6 21 H27 C31 21 31 18 29 17 H5 C2 18 3 21 6 21Z" fill="#9fbfe0"/></svg>
<div class="b" style="left:31px;top:1038.5px;width:15px;height:15px;background:#f08a8a;border-radius:50%;"></div>
<div class="t u" style="left:35.58px;top:1036.68px;font-size:10.50px;color:#2a0a0a;">5</div>
<div class="t u" style="left:50.00px;top:1038.66px;font-size:12.40px;color:#ffffff;transform:scaleX(0.9023);">30°C</div>
<div class="t u" style="left:50.00px;top:1054.66px;font-size:12.40px;color:#e6e6e6;transform:scaleX(0.9195);">Berawan</div>
<svg class="s" style="left:572px;top:1045px;" width="24" height="23" viewBox="0 0 24 23" fill="none"><defs><linearGradient id="wg" x1="0" y1="0" x2="1" y2="1"><stop offset="0" stop-color="#62d0ff"/><stop offset="1" stop-color="#1a8fe0"/></linearGradient></defs><rect x="0" y="0" width="11.2" height="11" fill="url(#wg)"/><rect x="12.5" y="0" width="11.2" height="11" fill="url(#wg)"/><rect x="0" y="12" width="11.2" height="11" fill="url(#wg)"/><rect x="12.5" y="12" width="11.2" height="11" fill="url(#wg)"/></svg>
<div class="b" style="left:609px;top:1040px;width:220px;height:32px;background:#373c3e;box-sizing:border-box;border:1px solid #4d5355;border-radius:16px;"></div>
<svg class="s" style="left:620px;top:1048px;" width="16" height="17" viewBox="0 0 16 17" fill="none"><circle cx="7" cy="7" r="5.5" stroke="#e8e8e8" stroke-width="1.5"/><path d="M11 11 L15 15.5" stroke="#e8e8e8" stroke-width="1.6"/></svg>
<div class="t u" style="left:646.00px;top:1046.65px;font-size:13.00px;color:#e0e0e0;">Search</div>
<svg class="s" style="left:780px;top:1040px;" width="44" height="32" viewBox="0 0 44 32" fill="none"><path d="M2 29 C8 25 30 24 42 27 C40 31 10 31 2 29 Z" fill="#c9b58a"/><path d="M12 12 C14 8 30 9 34 12 V25 H32 V17 L28 18 V25 H26 V17 H18 V25 H16 V17 L14 15 L9 14 L7 9 L10 6 L12 8 Z" fill="#cfcfe0"/><path d="M15 11 V17 M19 10 V17 M23 10 V17 M27 10 V17 M31 11 V16" stroke="#555570" stroke-width="1.3"/></svg>
<svg class="s" style="left:841px;top:1044px;" width="25" height="24" viewBox="0 0 25 24" fill="none"><rect x="0" y="7" width="16" height="15" rx="1.5" fill="#7a7a7a"/><rect x="7" y="1" width="17" height="15" rx="1.5" fill="#e6e6e6"/><rect x="5" y="9" width="9" height="7" fill="#bdbdbd"/></svg>
<svg class="s" style="left:884px;top:1043px;" width="26" height="24" viewBox="0 0 26 24" fill="none"><path d="M1 4 C1 2 2 1 4 1 H10 L13 4 H24 C25 4 25 5 25 6 V21 C25 22 24 23 23 23 H3 C2 23 1 22 1 21 Z" fill="#f8c43a"/><path d="M1 8 H25 V21 C25 22 24 23 23 23 H3 C2 23 1 22 1 21 Z" fill="#ffd75e"/><rect x="8" y="16" width="10" height="7" rx="1" fill="#1e79d8"/></svg>
<div class="b" style="left:891px;top:1073px;width:6px;height:2px;background:#9aa0a2;border-radius:1px;"></div>
<svg class="s" style="left:928px;top:1043px;" width="26" height="26" viewBox="0 0 26 26" fill="none"><defs><linearGradient id="eg" x1="0" y1="1" x2="1" y2="0"><stop offset="0" stop-color="#0c59a4"/><stop offset="0.6" stop-color="#1ba1e2"/><stop offset="1" stop-color="#50e6a0"/></linearGradient></defs><circle cx="13" cy="13" r="12" fill="url(#eg)"/><path d="M7 15 C7 9 19 8 21 13 C18 12 13 12 13 16 C13 20 18 22 22 20 C19 25 7 24 7 15Z" fill="#1b2426"/></svg>
<svg class="s" style="left:971px;top:1042px;" width="26" height="27" viewBox="0 0 26 27" fill="none"><rect x="1" y="6" width="24" height="20" rx="3" fill="#f2f2f2"/><path d="M8 6 V3 C8 1 18 1 18 3 V6" stroke="#3aa0e8" stroke-width="2"/><rect x="8" y="11" width="4.5" height="4.5" fill="#f25022"/><rect x="13.5" y="11" width="4.5" height="4.5" fill="#7fba00"/><rect x="8" y="16.5" width="4.5" height="4.5" fill="#00a4ef"/><rect x="13.5" y="16.5" width="4.5" height="4.5" fill="#ffb900"/></svg>
<svg class="s" style="left:1016px;top:1043px;" width="26" height="26" viewBox="0 0 26 26" fill="none"><path d="M13 1.5 A11.5 11.5 0 1 1 4.5 21 L1.5 24.5 L3 19 A11.5 11.5 0 0 1 13 1.5Z" stroke="#33c35b" stroke-width="2.2"/><path d="M8.5 8 C8 10 10 15 15 17.5 C17 18.5 18 17 18 16 L16 15 L15 16 C13 15 11 13 10 11 L11 10 L10 7.5 C9.5 7 9 7 8.5 8Z" fill="#33c35b"/></svg>
<div class="b" style="left:1026px;top:1073px;width:6px;height:2px;background:#9aa0a2;border-radius:1px;"></div>
<svg class="s" style="left:1060px;top:1041px;" width="30" height="28" viewBox="0 0 30 28" fill="none"><circle cx="13" cy="15" r="12" fill="#e94235"/><path d="M13 15 L2.6 21 A12 12 0 0 0 17 26.3 Z" fill="#34a853"/><path d="M13 15 L17 26.3 A12 12 0 0 0 23.4 9 Z" fill="#fbbc04"/><path d="M13 3 A12 12 0 0 1 23.4 9 H13 Z" fill="#e94235"/><circle cx="13" cy="15" r="5.5" fill="#fff"/><circle cx="13" cy="15" r="4.3" fill="#1a73e8"/><circle cx="23" cy="6" r="6" fill="#6e4a3a"/><text x="20.5" y="9.5" font-size="9" font-family="Liberation Sans" fill="#fff">k</text></svg>
<div class="b" style="left:1070px;top:1073px;width:6px;height:2px;background:#9aa0a2;border-radius:1px;"></div>
<svg class="s" style="left:1104px;top:1043px;" width="26" height="26" viewBox="0 0 26 26" fill="none"><rect x="1" y="1" width="18" height="17" rx="2" fill="#f4f4f4"/><path d="M3 3 H7 V7 H3Z M9 3 H13 V7 H9Z M3 9 H7 V13 H3Z" fill="#c0392b"/><rect x="8" y="8" width="9" height="9" fill="#ccc"/><circle cx="14" cy="23" r="2.5" stroke="#1e90ff" stroke-width="1.5"/><circle cx="23" cy="15" r="2.5" stroke="#1e90ff" stroke-width="1.5"/><path d="M14 20 L14 12 M20 15 L12 15" stroke="#888" stroke-width="1.3"/></svg>
<svg class="s" style="left:1151px;top:1043px;" width="21" height="26" viewBox="0 0 21 26" fill="none"><rect x="0.5" y="0.5" width="19" height="24" rx="1.5" fill="#707c84"/><rect x="2.5" y="2.5" width="15" height="4.5" fill="#4fc3f7"/><path d="M3 9 H7 V13 H3Z M8 9 H12 V13 H8Z M13 9 H17 V13 H13Z M3 14.5 H7 V18.5 H3Z M8 14.5 H12 V18.5 H8Z M3 20 H7 V23 H3Z M8 20 H12 V23 H8Z" fill="#e8eef2"/><rect x="13" y="14.5" width="4" height="8.5" fill="#2a5a8a"/></svg>
<svg class="s" style="left:1195px;top:1042px;" width="21" height="27" viewBox="0 0 21 27" fill="none"><rect x="0.5" y="2" width="19" height="23" rx="1" fill="#4fb3e8"/><path d="M3 1 V4 M6 1 V4 M9 1 V4 M12 1 V4 M15 1 V4" stroke="#2a6ea0" stroke-width="1"/><path d="M3 8 H17 M3 12 H17 M3 16 H17" stroke="#1a4f80" stroke-width="2"/><rect x="0.5" y="23" width="19" height="2.5" fill="#e07a2a"/></svg>
<svg class="s" style="left:1237px;top:1043px;" width="25" height="25" viewBox="0 0 25 25" fill="none"><circle cx="12.5" cy="12.5" r="12" fill="#e8414f"/><path d="M7 19 L12.5 6 L18 19" stroke="#fff" stroke-width="2.4"/></svg>
<div class="b" style="left:1246px;top:1073px;width:6px;height:2px;background:#9aa0a2;border-radius:1px;"></div>
<div class="b" style="left:1273px;top:1036px;width:38px;height:40px;background:#2a3335;box-sizing:border-box;border:1px solid #394244;border-radius:4px;"></div>
<svg class="s" style="left:1280px;top:1044px;" width="25" height="24" viewBox="0 0 25 24" fill="none"><rect x="5" y="0" width="19" height="23" rx="2" fill="#107c41"/><rect x="5" y="0" width="19" height="7" rx="2" fill="#63c55a"/><rect x="15" y="0" width="9" height="7" fill="#8fd66f"/><rect x="5" y="7" width="19" height="8" fill="#21a366"/><rect x="0" y="8" width="12" height="12" rx="1.5" fill="#185c37"/><path d="M3 11 L9 17 M9 11 L3 17" stroke="#fff" stroke-width="1.6"/></svg>
<div class="b" style="left:1285px;top:1072.5px;width:16px;height:2.5px;background:#4cc2ff;border-radius:2px;"></div>
<svg class="s" style="left:1324px;top:1045px;" width="26" height="21" viewBox="0 0 26 21" fill="none"><rect x="0.5" y="0.5" width="24.5" height="19.5" rx="2" fill="#3a3a3a"/><rect x="0.5" y="0.5" width="24.5" height="3" fill="#6a6a6a"/><path d="M4 8 L8.5 11.5 L4 15" stroke="#fff" stroke-width="1.8"/><path d="M10 15.5 H17" stroke="#fff" stroke-width="1.6"/></svg>
<div class="b" style="left:1334px;top:1073px;width:6px;height:2px;background:#9aa0a2;border-radius:1px;"></div>
<svg class="s" style="left:1696px;top:1052px;" width="12" height="8" viewBox="0 0 12 8" fill="none"><path d="M1 7 L6 2 L11 7" stroke="#e8e8e8" stroke-width="1.3"/></svg>
<svg class="s" style="left:1725px;top:1048px;" width="18" height="17" viewBox="0 0 18 17" fill="none"><path d="M4 14 C0 14 0 8 4 8 C4 4 10 3 12 6 C14 4 18 6 17 10 C19 11 18 14 16 14 Z" fill="#777"/><path d="M2 1 L16 16" stroke="#ddd" stroke-width="1.2"/></svg>
<svg class="s" style="left:1757px;top:1047px;" width="17" height="18" viewBox="0 0 17 18" fill="none"><rect x="0.5" y="1.5" width="11" height="10" stroke="#e8e8e8" stroke-width="1.1"/><path d="M3 15.5 H9 M6 11.5 V15.5" stroke="#e8e8e8" stroke-width="1.1"/><rect x="12" y="0.5" width="3.5" height="5" stroke="#e8e8e8" stroke-width="1"/><path d="M13.8 5.5 V16" stroke="#e8e8e8" stroke-width="1.1"/></svg>
<svg class="s" style="left:1781px;top:1048px;" width="19" height="16" viewBox="0 0 19 16" fill="none"><path d="M1 5 H4 L8 1.5 V14.5 L4 11 H1 Z" stroke="#e8e8e8" stroke-width="1.1"/><path d="M10.5 5.5 C12 7 12 9 10.5 10.5 M13 3.5 C15.5 6 15.5 10 13 12.5 M15.5 1.5 C19 5 19 11 15.5 14.5" stroke="#e8e8e8" stroke-width="1.1"/></svg>
<div class="t u" style="left:1848.00px;top:1038.66px;font-size:12.40px;color:#f2f2f2;transform:scaleX(0.9249);">12:53</div>
<div class="t u" style="left:1815.70px;top:1054.66px;font-size:12.40px;color:#f2f2f2;transform:scaleX(0.9829);">31/01/2026</div>
<svg class="s" style="left:1884px;top:1048px;" width="17" height="17" viewBox="0 0 17 17" fill="none"><path d="M3 13 V8 C3 4 6 2 8.5 2 C11 2 14 4 14 8 V13 L15.5 14.5 H1.5 Z" fill="#e8e8e8"/><path d="M6.5 15.5 C7 17 10 17 10.5 15.5" stroke="#e8e8e8" stroke-width="1"/><text x="5" y="12" font-size="6" font-family="Liberation Sans" font-weight="bold" fill="#1b2426">z</text><text x="11" y="5" font-size="6" font-family="Liberation Sans" font-weight="bold" fill="#e8e8e8">z</text></svg>
</body></html>
